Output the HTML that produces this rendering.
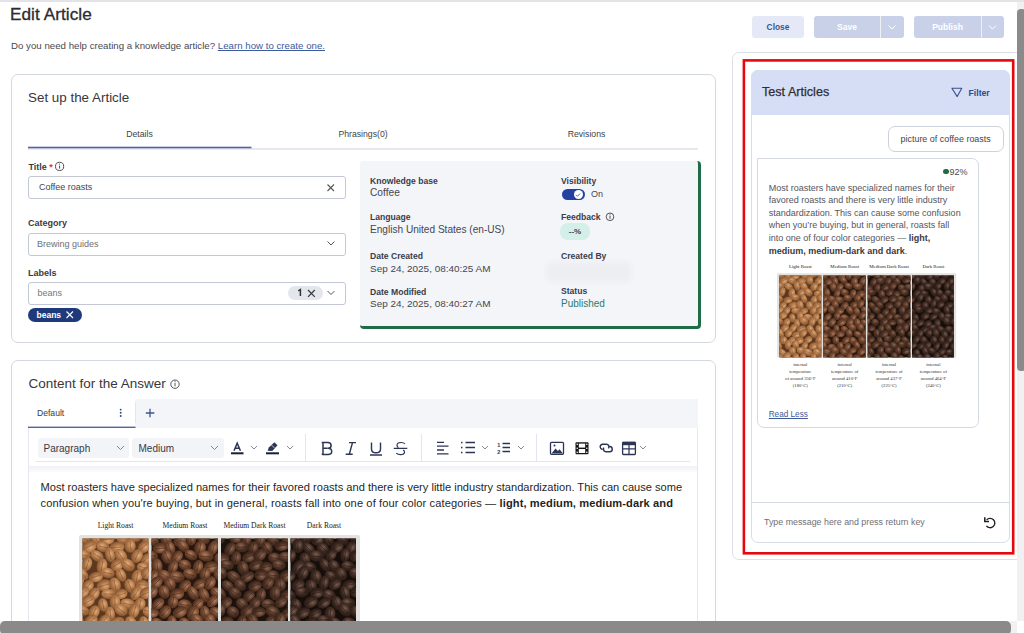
<!DOCTYPE html>
<html><head><meta charset="utf-8">
<style>
*{box-sizing:border-box;margin:0;padding:0}
html,body{width:1024px;height:633px;overflow:hidden;background:#fff;font-family:"Liberation Sans",sans-serif;color:#333}
.a{position:absolute;white-space:nowrap}
.card{position:absolute;border:1px solid #d3d7e0;border-radius:7px;background:#fff}
.lbl{position:absolute;font-weight:700;color:#3b3b3f;white-space:nowrap}
.inp{position:absolute;border:1px solid #c3c8d4;border-radius:3px;background:#fff}
svg{position:absolute;overflow:visible}
</style></head><body>
<svg width="0" height="0" style="position:absolute"><defs><clipPath id="c0"><rect x="3.5" y="19.5" width="66.0" height="128.5"/></clipPath><radialGradient id="g0" cx="0.42" cy="0.38" r="0.62"><stop offset="0" stop-color="rgb(226, 172, 122)"/><stop offset="0.55" stop-color="rgb(176, 118, 72)"/><stop offset="1" stop-color="rgb(134, 87, 51)"/></radialGradient><clipPath id="c1"><rect x="72.5" y="19.5" width="66.5" height="128.5"/></clipPath><radialGradient id="g1" cx="0.42" cy="0.38" r="0.62"><stop offset="0" stop-color="rgb(178, 126, 96)"/><stop offset="0.55" stop-color="rgb(110, 68, 45)"/><stop offset="1" stop-color="rgb(75, 45, 29)"/></radialGradient><clipPath id="c2"><rect x="142" y="19.5" width="67.0" height="128.5"/></clipPath><radialGradient id="g2" cx="0.42" cy="0.38" r="0.62"><stop offset="0" stop-color="rgb(142, 102, 82)"/><stop offset="0.55" stop-color="rgb(80, 51, 37)"/><stop offset="1" stop-color="rgb(54, 34, 24)"/></radialGradient><clipPath id="c3"><rect x="211.5" y="19.5" width="65.5" height="128.5"/></clipPath><radialGradient id="g3" cx="0.42" cy="0.38" r="0.62"><stop offset="0" stop-color="rgb(120, 92, 80)"/><stop offset="0.55" stop-color="rgb(60, 40, 32)"/><stop offset="1" stop-color="rgb(41, 27, 21)"/></radialGradient><symbol id="fig" viewBox="0 0 281 196"><rect x="0" y="16" width="281" height="132" rx="2" fill="#e4e2df"/><rect x="3.5" y="19.5" width="66.0" height="128.5" fill="rgb(92, 56, 30)"/><g clip-path="url(#c0)" fill="url(#g0)"><ellipse cx="5" cy="19" rx="7.1" ry="5.4" transform="rotate(33 5 19)"/><path d="M1 17L9 22" stroke="rgb(92, 56, 30)" stroke-width="0.7" stroke-opacity="0.6"/><ellipse cx="17" cy="20" rx="7.5" ry="4.9" transform="rotate(55 17 20)"/><path d="M14 16L20 24" stroke="rgb(92, 56, 30)" stroke-width="0.7" stroke-opacity="0.6"/><ellipse cx="28" cy="21" rx="7.4" ry="4.8" transform="rotate(177 28 21)"/><path d="M33 20L23 21" stroke="rgb(92, 56, 30)" stroke-width="0.7" stroke-opacity="0.6"/><ellipse cx="45" cy="20" rx="7.3" ry="5.0" transform="rotate(3 45 20)"/><path d="M40 20L50 20" stroke="rgb(92, 56, 30)" stroke-width="0.7" stroke-opacity="0.6"/><ellipse cx="56" cy="18" rx="6.7" ry="5.0" transform="rotate(5 56 18)"/><path d="M52 17L61 18" stroke="rgb(92, 56, 30)" stroke-width="0.7" stroke-opacity="0.6"/><ellipse cx="69" cy="19" rx="7.6" ry="5.3" transform="rotate(115 69 19)"/><path d="M72 14L67 24" stroke="rgb(92, 56, 30)" stroke-width="0.7" stroke-opacity="0.6"/><ellipse cx="10" cy="28" rx="7.8" ry="5.8" transform="rotate(151 10 28)"/><path d="M15 25L5 30" stroke="rgb(92, 56, 30)" stroke-width="0.7" stroke-opacity="0.6"/><ellipse cx="24" cy="28" rx="6.7" ry="5.1" transform="rotate(13 24 28)"/><path d="M20 27L29 29" stroke="rgb(92, 56, 30)" stroke-width="0.7" stroke-opacity="0.6"/><ellipse cx="38" cy="28" rx="7.6" ry="5.2" transform="rotate(172 38 28)"/><path d="M43 28L32 29" stroke="rgb(92, 56, 30)" stroke-width="0.7" stroke-opacity="0.6"/><ellipse cx="51" cy="27" rx="6.7" ry="5.7" transform="rotate(85 51 27)"/><path d="M51 22L52 31" stroke="rgb(92, 56, 30)" stroke-width="0.7" stroke-opacity="0.6"/><ellipse cx="65" cy="28" rx="6.5" ry="5.4" transform="rotate(140 65 28)"/><path d="M68 25L61 31" stroke="rgb(92, 56, 30)" stroke-width="0.7" stroke-opacity="0.6"/><ellipse cx="5" cy="36" rx="6.7" ry="4.9" transform="rotate(11 5 36)"/><path d="M-0 35L9 37" stroke="rgb(92, 56, 30)" stroke-width="0.7" stroke-opacity="0.6"/><ellipse cx="18" cy="37" rx="7.2" ry="5.2" transform="rotate(34 18 37)"/><path d="M14 34L22 39" stroke="rgb(92, 56, 30)" stroke-width="0.7" stroke-opacity="0.6"/><ellipse cx="31" cy="36" rx="7.3" ry="4.9" transform="rotate(76 31 36)"/><path d="M30 31L32 41" stroke="rgb(92, 56, 30)" stroke-width="0.7" stroke-opacity="0.6"/><ellipse cx="42" cy="37" rx="7.8" ry="5.6" transform="rotate(55 42 37)"/><path d="M39 33L45 41" stroke="rgb(92, 56, 30)" stroke-width="0.7" stroke-opacity="0.6"/><ellipse cx="58" cy="37" rx="7.0" ry="5.7" transform="rotate(116 58 37)"/><path d="M60 32L56 41" stroke="rgb(92, 56, 30)" stroke-width="0.7" stroke-opacity="0.6"/><ellipse cx="68" cy="40" rx="6.7" ry="5.1" transform="rotate(139 68 40)"/><path d="M71 37L64 43" stroke="rgb(92, 56, 30)" stroke-width="0.7" stroke-opacity="0.6"/><ellipse cx="8" cy="45" rx="7.2" ry="5.0" transform="rotate(108 8 45)"/><path d="M10 41L7 50" stroke="rgb(92, 56, 30)" stroke-width="0.7" stroke-opacity="0.6"/><ellipse cx="23" cy="47" rx="7.7" ry="5.3" transform="rotate(103 23 47)"/><path d="M24 42L22 52" stroke="rgb(92, 56, 30)" stroke-width="0.7" stroke-opacity="0.6"/><ellipse cx="38" cy="46" rx="6.6" ry="5.7" transform="rotate(147 38 46)"/><path d="M42 43L34 48" stroke="rgb(92, 56, 30)" stroke-width="0.7" stroke-opacity="0.6"/><ellipse cx="49" cy="46" rx="7.4" ry="5.7" transform="rotate(35 49 46)"/><path d="M44 43L53 49" stroke="rgb(92, 56, 30)" stroke-width="0.7" stroke-opacity="0.6"/><ellipse cx="65" cy="49" rx="7.2" ry="5.2" transform="rotate(19 65 49)"/><path d="M60 47L70 50" stroke="rgb(92, 56, 30)" stroke-width="0.7" stroke-opacity="0.6"/><ellipse cx="74" cy="49" rx="6.7" ry="5.5" transform="rotate(46 74 49)"/><path d="M71 45L78 52" stroke="rgb(92, 56, 30)" stroke-width="0.7" stroke-opacity="0.6"/><ellipse cx="3" cy="55" rx="7.4" ry="4.9" transform="rotate(41 3 55)"/><path d="M-1 52L7 58" stroke="rgb(92, 56, 30)" stroke-width="0.7" stroke-opacity="0.6"/><ellipse cx="17" cy="58" rx="7.3" ry="5.1" transform="rotate(165 17 58)"/><path d="M22 56L12 59" stroke="rgb(92, 56, 30)" stroke-width="0.7" stroke-opacity="0.6"/><ellipse cx="29" cy="54" rx="6.8" ry="5.2" transform="rotate(11 29 54)"/><path d="M24 53L33 55" stroke="rgb(92, 56, 30)" stroke-width="0.7" stroke-opacity="0.6"/><ellipse cx="42" cy="56" rx="7.2" ry="4.9" transform="rotate(65 42 56)"/><path d="M40 51L44 60" stroke="rgb(92, 56, 30)" stroke-width="0.7" stroke-opacity="0.6"/><ellipse cx="58" cy="58" rx="7.3" ry="5.5" transform="rotate(105 58 58)"/><path d="M59 53L57 63" stroke="rgb(92, 56, 30)" stroke-width="0.7" stroke-opacity="0.6"/><ellipse cx="68" cy="54" rx="6.4" ry="5.7" transform="rotate(126 68 54)"/><path d="M71 51L65 58" stroke="rgb(92, 56, 30)" stroke-width="0.7" stroke-opacity="0.6"/><ellipse cx="-1" cy="63" rx="7.3" ry="5.3" transform="rotate(131 -1 63)"/><path d="M2 60L-5 67" stroke="rgb(92, 56, 30)" stroke-width="0.7" stroke-opacity="0.6"/><ellipse cx="9" cy="67" rx="6.5" ry="5.3" transform="rotate(133 9 67)"/><path d="M12 64L6 71" stroke="rgb(92, 56, 30)" stroke-width="0.7" stroke-opacity="0.6"/><ellipse cx="25" cy="66" rx="7.4" ry="5.6" transform="rotate(165 25 66)"/><path d="M30 65L20 68" stroke="rgb(92, 56, 30)" stroke-width="0.7" stroke-opacity="0.6"/><ellipse cx="36" cy="66" rx="7.7" ry="5.7" transform="rotate(75 36 66)"/><path d="M35 61L37 71" stroke="rgb(92, 56, 30)" stroke-width="0.7" stroke-opacity="0.6"/><ellipse cx="51" cy="67" rx="7.2" ry="5.4" transform="rotate(69 51 67)"/><path d="M49 62L53 72" stroke="rgb(92, 56, 30)" stroke-width="0.7" stroke-opacity="0.6"/><ellipse cx="63" cy="66" rx="6.5" ry="5.4" transform="rotate(179 63 66)"/><path d="M68 66L59 66" stroke="rgb(92, 56, 30)" stroke-width="0.7" stroke-opacity="0.6"/><ellipse cx="4" cy="74" rx="7.6" ry="4.9" transform="rotate(135 4 74)"/><path d="M8 71L0 78" stroke="rgb(92, 56, 30)" stroke-width="0.7" stroke-opacity="0.6"/><ellipse cx="15" cy="75" rx="7.1" ry="5.0" transform="rotate(126 15 75)"/><path d="M18 71L12 79" stroke="rgb(92, 56, 30)" stroke-width="0.7" stroke-opacity="0.6"/><ellipse cx="30" cy="75" rx="7.7" ry="5.1" transform="rotate(2 30 75)"/><path d="M25 75L35 75" stroke="rgb(92, 56, 30)" stroke-width="0.7" stroke-opacity="0.6"/><ellipse cx="42" cy="75" rx="6.7" ry="5.0" transform="rotate(163 42 75)"/><path d="M47 74L38 77" stroke="rgb(92, 56, 30)" stroke-width="0.7" stroke-opacity="0.6"/><ellipse cx="57" cy="74" rx="7.6" ry="5.1" transform="rotate(120 57 74)"/><path d="M60 70L54 79" stroke="rgb(92, 56, 30)" stroke-width="0.7" stroke-opacity="0.6"/><ellipse cx="68" cy="74" rx="7.5" ry="5.7" transform="rotate(158 68 74)"/><path d="M73 72L63 76" stroke="rgb(92, 56, 30)" stroke-width="0.7" stroke-opacity="0.6"/><ellipse cx="9" cy="82" rx="7.1" ry="5.6" transform="rotate(153 9 82)"/><path d="M14 80L5 85" stroke="rgb(92, 56, 30)" stroke-width="0.7" stroke-opacity="0.6"/><ellipse cx="24" cy="86" rx="6.8" ry="5.0" transform="rotate(81 24 86)"/><path d="M23 81L25 90" stroke="rgb(92, 56, 30)" stroke-width="0.7" stroke-opacity="0.6"/><ellipse cx="36" cy="83" rx="7.0" ry="5.4" transform="rotate(89 36 83)"/><path d="M36 78L36 87" stroke="rgb(92, 56, 30)" stroke-width="0.7" stroke-opacity="0.6"/><ellipse cx="49" cy="85" rx="7.8" ry="5.3" transform="rotate(13 49 85)"/><path d="M44 84L54 86" stroke="rgb(92, 56, 30)" stroke-width="0.7" stroke-opacity="0.6"/><ellipse cx="61" cy="85" rx="6.5" ry="5.5" transform="rotate(103 61 85)"/><path d="M62 81L60 90" stroke="rgb(92, 56, 30)" stroke-width="0.7" stroke-opacity="0.6"/><ellipse cx="3" cy="91" rx="7.6" ry="5.0" transform="rotate(25 3 91)"/><path d="M-1 89L8 93" stroke="rgb(92, 56, 30)" stroke-width="0.7" stroke-opacity="0.6"/><ellipse cx="15" cy="93" rx="7.0" ry="5.4" transform="rotate(118 15 93)"/><path d="M17 89L13 98" stroke="rgb(92, 56, 30)" stroke-width="0.7" stroke-opacity="0.6"/><ellipse cx="31" cy="95" rx="7.4" ry="5.0" transform="rotate(86 31 95)"/><path d="M31 90L32 100" stroke="rgb(92, 56, 30)" stroke-width="0.7" stroke-opacity="0.6"/><ellipse cx="42" cy="91" rx="7.1" ry="5.5" transform="rotate(32 42 91)"/><path d="M38 88L46 94" stroke="rgb(92, 56, 30)" stroke-width="0.7" stroke-opacity="0.6"/><ellipse cx="55" cy="92" rx="7.4" ry="5.3" transform="rotate(111 55 92)"/><path d="M57 87L54 97" stroke="rgb(92, 56, 30)" stroke-width="0.7" stroke-opacity="0.6"/><ellipse cx="71" cy="93" rx="7.5" ry="5.7" transform="rotate(16 71 93)"/><path d="M65 91L76 94" stroke="rgb(92, 56, 30)" stroke-width="0.7" stroke-opacity="0.6"/><ellipse cx="-1" cy="103" rx="6.6" ry="5.3" transform="rotate(113 -1 103)"/><path d="M0 99L-3 107" stroke="rgb(92, 56, 30)" stroke-width="0.7" stroke-opacity="0.6"/><ellipse cx="12" cy="102" rx="7.2" ry="5.7" transform="rotate(143 12 102)"/><path d="M16 99L8 105" stroke="rgb(92, 56, 30)" stroke-width="0.7" stroke-opacity="0.6"/><ellipse cx="25" cy="102" rx="7.3" ry="5.0" transform="rotate(130 25 102)"/><path d="M28 98L22 106" stroke="rgb(92, 56, 30)" stroke-width="0.7" stroke-opacity="0.6"/><ellipse cx="38" cy="103" rx="7.4" ry="5.0" transform="rotate(162 38 103)"/><path d="M43 101L33 104" stroke="rgb(92, 56, 30)" stroke-width="0.7" stroke-opacity="0.6"/><ellipse cx="52" cy="104" rx="7.2" ry="5.6" transform="rotate(58 52 104)"/><path d="M49 100L54 108" stroke="rgb(92, 56, 30)" stroke-width="0.7" stroke-opacity="0.6"/><ellipse cx="65" cy="104" rx="6.9" ry="4.9" transform="rotate(79 65 104)"/><path d="M64 99L65 108" stroke="rgb(92, 56, 30)" stroke-width="0.7" stroke-opacity="0.6"/><ellipse cx="5" cy="110" rx="7.5" ry="5.0" transform="rotate(60 5 110)"/><path d="M2 105L7 114" stroke="rgb(92, 56, 30)" stroke-width="0.7" stroke-opacity="0.6"/><ellipse cx="18" cy="110" rx="6.6" ry="5.3" transform="rotate(130 18 110)"/><path d="M21 106L15 113" stroke="rgb(92, 56, 30)" stroke-width="0.7" stroke-opacity="0.6"/><ellipse cx="31" cy="112" rx="7.7" ry="5.3" transform="rotate(171 31 112)"/><path d="M37 111L26 113" stroke="rgb(92, 56, 30)" stroke-width="0.7" stroke-opacity="0.6"/><ellipse cx="41" cy="110" rx="7.1" ry="5.1" transform="rotate(131 41 110)"/><path d="M45 106L38 114" stroke="rgb(92, 56, 30)" stroke-width="0.7" stroke-opacity="0.6"/><ellipse cx="57" cy="111" rx="7.6" ry="5.4" transform="rotate(56 57 111)"/><path d="M54 107L60 116" stroke="rgb(92, 56, 30)" stroke-width="0.7" stroke-opacity="0.6"/><ellipse cx="69" cy="113" rx="7.7" ry="5.0" transform="rotate(153 69 113)"/><path d="M74 110L64 115" stroke="rgb(92, 56, 30)" stroke-width="0.7" stroke-opacity="0.6"/><ellipse cx="-1" cy="121" rx="7.2" ry="5.0" transform="rotate(96 -1 121)"/><path d="M-1 116L-2 126" stroke="rgb(92, 56, 30)" stroke-width="0.7" stroke-opacity="0.6"/><ellipse cx="10" cy="121" rx="6.4" ry="5.8" transform="rotate(93 10 121)"/><path d="M10 116L10 125" stroke="rgb(92, 56, 30)" stroke-width="0.7" stroke-opacity="0.6"/><ellipse cx="23" cy="122" rx="7.2" ry="5.3" transform="rotate(124 23 122)"/><path d="M26 118L20 126" stroke="rgb(92, 56, 30)" stroke-width="0.7" stroke-opacity="0.6"/><ellipse cx="35" cy="121" rx="7.0" ry="5.8" transform="rotate(166 35 121)"/><path d="M40 119L30 122" stroke="rgb(92, 56, 30)" stroke-width="0.7" stroke-opacity="0.6"/><ellipse cx="49" cy="120" rx="6.6" ry="5.2" transform="rotate(147 49 120)"/><path d="M53 118L45 123" stroke="rgb(92, 56, 30)" stroke-width="0.7" stroke-opacity="0.6"/><ellipse cx="65" cy="120" rx="6.8" ry="5.0" transform="rotate(111 65 120)"/><path d="M66 116L63 125" stroke="rgb(92, 56, 30)" stroke-width="0.7" stroke-opacity="0.6"/><ellipse cx="2" cy="129" rx="7.4" ry="5.1" transform="rotate(64 2 129)"/><path d="M0 124L5 133" stroke="rgb(92, 56, 30)" stroke-width="0.7" stroke-opacity="0.6"/><ellipse cx="17" cy="128" rx="7.4" ry="4.9" transform="rotate(92 17 128)"/><path d="M17 123L17 133" stroke="rgb(92, 56, 30)" stroke-width="0.7" stroke-opacity="0.6"/><ellipse cx="29" cy="128" rx="7.1" ry="5.2" transform="rotate(68 29 128)"/><path d="M27 124L31 133" stroke="rgb(92, 56, 30)" stroke-width="0.7" stroke-opacity="0.6"/><ellipse cx="43" cy="130" rx="6.6" ry="5.0" transform="rotate(114 43 130)"/><path d="M45 126L41 134" stroke="rgb(92, 56, 30)" stroke-width="0.7" stroke-opacity="0.6"/><ellipse cx="57" cy="130" rx="7.6" ry="5.4" transform="rotate(154 57 130)"/><path d="M62 127L52 132" stroke="rgb(92, 56, 30)" stroke-width="0.7" stroke-opacity="0.6"/><ellipse cx="68" cy="131" rx="7.5" ry="5.7" transform="rotate(57 68 131)"/><path d="M66 126L71 135" stroke="rgb(92, 56, 30)" stroke-width="0.7" stroke-opacity="0.6"/><ellipse cx="9" cy="141" rx="7.6" ry="4.9" transform="rotate(43 9 141)"/><path d="M5 137L13 144" stroke="rgb(92, 56, 30)" stroke-width="0.7" stroke-opacity="0.6"/><ellipse cx="24" cy="138" rx="6.5" ry="5.6" transform="rotate(76 24 138)"/><path d="M23 133L25 142" stroke="rgb(92, 56, 30)" stroke-width="0.7" stroke-opacity="0.6"/><ellipse cx="38" cy="137" rx="7.0" ry="5.5" transform="rotate(3 38 137)"/><path d="M33 137L43 138" stroke="rgb(92, 56, 30)" stroke-width="0.7" stroke-opacity="0.6"/><ellipse cx="49" cy="140" rx="7.7" ry="5.8" transform="rotate(21 49 140)"/><path d="M43 138L54 141" stroke="rgb(92, 56, 30)" stroke-width="0.7" stroke-opacity="0.6"/><ellipse cx="63" cy="140" rx="7.1" ry="5.5" transform="rotate(34 63 140)"/><path d="M59 137L67 143" stroke="rgb(92, 56, 30)" stroke-width="0.7" stroke-opacity="0.6"/><ellipse cx="74" cy="137" rx="6.5" ry="5.4" transform="rotate(93 74 137)"/><path d="M75 133L74 142" stroke="rgb(92, 56, 30)" stroke-width="0.7" stroke-opacity="0.6"/><ellipse cx="2" cy="147" rx="7.6" ry="5.8" transform="rotate(167 2 147)"/><path d="M7 146L-3 148" stroke="rgb(92, 56, 30)" stroke-width="0.7" stroke-opacity="0.6"/><ellipse cx="15" cy="146" rx="7.7" ry="5.3" transform="rotate(138 15 146)"/><path d="M19 143L11 150" stroke="rgb(92, 56, 30)" stroke-width="0.7" stroke-opacity="0.6"/><ellipse cx="29" cy="148" rx="7.1" ry="5.2" transform="rotate(108 29 148)"/><path d="M31 143L28 153" stroke="rgb(92, 56, 30)" stroke-width="0.7" stroke-opacity="0.6"/><ellipse cx="41" cy="149" rx="7.6" ry="5.0" transform="rotate(82 41 149)"/><path d="M40 144L42 154" stroke="rgb(92, 56, 30)" stroke-width="0.7" stroke-opacity="0.6"/><ellipse cx="57" cy="148" rx="6.7" ry="5.0" transform="rotate(92 57 148)"/><path d="M57 143L57 152" stroke="rgb(92, 56, 30)" stroke-width="0.7" stroke-opacity="0.6"/><ellipse cx="68" cy="150" rx="7.5" ry="5.5" transform="rotate(155 68 150)"/><path d="M72 147L63 152" stroke="rgb(92, 56, 30)" stroke-width="0.7" stroke-opacity="0.6"/></g><rect x="72.5" y="19.5" width="66.5" height="128.5" fill="rgb(40, 23, 14)"/><g clip-path="url(#c1)" fill="url(#g1)"><ellipse cx="73" cy="20" rx="7.8" ry="5.6" transform="rotate(46 73 20)"/><path d="M69 16L77 23" stroke="rgb(40, 23, 14)" stroke-width="0.7" stroke-opacity="0.6"/><ellipse cx="87" cy="20" rx="7.5" ry="5.6" transform="rotate(73 87 20)"/><path d="M86 15L89 25" stroke="rgb(40, 23, 14)" stroke-width="0.7" stroke-opacity="0.6"/><ellipse cx="101" cy="21" rx="7.4" ry="5.6" transform="rotate(138 101 21)"/><path d="M105 18L97 24" stroke="rgb(40, 23, 14)" stroke-width="0.7" stroke-opacity="0.6"/><ellipse cx="112" cy="20" rx="6.5" ry="5.1" transform="rotate(84 112 20)"/><path d="M112 16L112 25" stroke="rgb(40, 23, 14)" stroke-width="0.7" stroke-opacity="0.6"/><ellipse cx="124" cy="19" rx="7.3" ry="5.4" transform="rotate(42 124 19)"/><path d="M120 16L128 22" stroke="rgb(40, 23, 14)" stroke-width="0.7" stroke-opacity="0.6"/><ellipse cx="141" cy="20" rx="6.9" ry="5.5" transform="rotate(103 141 20)"/><path d="M142 15L140 25" stroke="rgb(40, 23, 14)" stroke-width="0.7" stroke-opacity="0.6"/><ellipse cx="81" cy="29" rx="7.4" ry="5.6" transform="rotate(176 81 29)"/><path d="M86 29L76 30" stroke="rgb(40, 23, 14)" stroke-width="0.7" stroke-opacity="0.6"/><ellipse cx="91" cy="29" rx="7.4" ry="5.1" transform="rotate(72 91 29)"/><path d="M89 24L92 34" stroke="rgb(40, 23, 14)" stroke-width="0.7" stroke-opacity="0.6"/><ellipse cx="104" cy="27" rx="6.9" ry="4.9" transform="rotate(45 104 27)"/><path d="M101 24L107 31" stroke="rgb(40, 23, 14)" stroke-width="0.7" stroke-opacity="0.6"/><ellipse cx="121" cy="29" rx="7.1" ry="5.8" transform="rotate(102 121 29)"/><path d="M122 24L120 34" stroke="rgb(40, 23, 14)" stroke-width="0.7" stroke-opacity="0.6"/><ellipse cx="134" cy="29" rx="7.5" ry="4.9" transform="rotate(108 134 29)"/><path d="M136 24L133 34" stroke="rgb(40, 23, 14)" stroke-width="0.7" stroke-opacity="0.6"/><ellipse cx="72" cy="37" rx="7.1" ry="5.4" transform="rotate(11 72 37)"/><path d="M68 36L77 37" stroke="rgb(40, 23, 14)" stroke-width="0.7" stroke-opacity="0.6"/><ellipse cx="88" cy="38" rx="7.1" ry="5.4" transform="rotate(66 88 38)"/><path d="M86 33L90 42" stroke="rgb(40, 23, 14)" stroke-width="0.7" stroke-opacity="0.6"/><ellipse cx="98" cy="38" rx="7.2" ry="5.1" transform="rotate(129 98 38)"/><path d="M101 35L95 42" stroke="rgb(40, 23, 14)" stroke-width="0.7" stroke-opacity="0.6"/><ellipse cx="112" cy="36" rx="6.7" ry="4.8" transform="rotate(28 112 36)"/><path d="M107 34L116 38" stroke="rgb(40, 23, 14)" stroke-width="0.7" stroke-opacity="0.6"/><ellipse cx="127" cy="37" rx="7.7" ry="5.5" transform="rotate(9 127 37)"/><path d="M121 37L132 38" stroke="rgb(40, 23, 14)" stroke-width="0.7" stroke-opacity="0.6"/><ellipse cx="141" cy="40" rx="6.5" ry="5.7" transform="rotate(77 141 40)"/><path d="M140 35L142 44" stroke="rgb(40, 23, 14)" stroke-width="0.7" stroke-opacity="0.6"/><ellipse cx="78" cy="47" rx="7.7" ry="5.5" transform="rotate(84 78 47)"/><path d="M78 42L79 53" stroke="rgb(40, 23, 14)" stroke-width="0.7" stroke-opacity="0.6"/><ellipse cx="94" cy="48" rx="7.2" ry="4.9" transform="rotate(112 94 48)"/><path d="M96 44L92 53" stroke="rgb(40, 23, 14)" stroke-width="0.7" stroke-opacity="0.6"/><ellipse cx="106" cy="46" rx="6.5" ry="5.3" transform="rotate(22 106 46)"/><path d="M101 44L110 48" stroke="rgb(40, 23, 14)" stroke-width="0.7" stroke-opacity="0.6"/><ellipse cx="119" cy="48" rx="7.0" ry="5.1" transform="rotate(105 119 48)"/><path d="M120 43L118 52" stroke="rgb(40, 23, 14)" stroke-width="0.7" stroke-opacity="0.6"/><ellipse cx="132" cy="48" rx="7.1" ry="5.8" transform="rotate(171 132 48)"/><path d="M137 47L127 49" stroke="rgb(40, 23, 14)" stroke-width="0.7" stroke-opacity="0.6"/><ellipse cx="74" cy="57" rx="6.9" ry="5.1" transform="rotate(123 74 57)"/><path d="M76 53L71 61" stroke="rgb(40, 23, 14)" stroke-width="0.7" stroke-opacity="0.6"/><ellipse cx="86" cy="57" rx="7.3" ry="5.6" transform="rotate(34 86 57)"/><path d="M82 54L90 59" stroke="rgb(40, 23, 14)" stroke-width="0.7" stroke-opacity="0.6"/><ellipse cx="98" cy="58" rx="7.7" ry="5.7" transform="rotate(7 98 58)"/><path d="M93 57L103 59" stroke="rgb(40, 23, 14)" stroke-width="0.7" stroke-opacity="0.6"/><ellipse cx="111" cy="55" rx="7.0" ry="5.4" transform="rotate(18 111 55)"/><path d="M106 54L115 57" stroke="rgb(40, 23, 14)" stroke-width="0.7" stroke-opacity="0.6"/><ellipse cx="126" cy="55" rx="6.5" ry="5.5" transform="rotate(99 126 55)"/><path d="M127 50L125 59" stroke="rgb(40, 23, 14)" stroke-width="0.7" stroke-opacity="0.6"/><ellipse cx="140" cy="56" rx="7.1" ry="5.0" transform="rotate(62 140 56)"/><path d="M137 51L142 60" stroke="rgb(40, 23, 14)" stroke-width="0.7" stroke-opacity="0.6"/><ellipse cx="77" cy="64" rx="7.5" ry="5.4" transform="rotate(138 77 64)"/><path d="M81 60L74 67" stroke="rgb(40, 23, 14)" stroke-width="0.7" stroke-opacity="0.6"/><ellipse cx="91" cy="65" rx="6.8" ry="5.6" transform="rotate(66 91 65)"/><path d="M89 61L93 69" stroke="rgb(40, 23, 14)" stroke-width="0.7" stroke-opacity="0.6"/><ellipse cx="106" cy="67" rx="6.9" ry="5.3" transform="rotate(134 106 67)"/><path d="M110 64L103 71" stroke="rgb(40, 23, 14)" stroke-width="0.7" stroke-opacity="0.6"/><ellipse cx="121" cy="65" rx="6.9" ry="4.9" transform="rotate(158 121 65)"/><path d="M125 63L116 67" stroke="rgb(40, 23, 14)" stroke-width="0.7" stroke-opacity="0.6"/><ellipse cx="131" cy="64" rx="7.2" ry="5.3" transform="rotate(123 131 64)"/><path d="M133 60L128 68" stroke="rgb(40, 23, 14)" stroke-width="0.7" stroke-opacity="0.6"/><ellipse cx="73" cy="73" rx="6.8" ry="5.5" transform="rotate(125 73 73)"/><path d="M76 69L70 77" stroke="rgb(40, 23, 14)" stroke-width="0.7" stroke-opacity="0.6"/><ellipse cx="85" cy="73" rx="6.9" ry="5.5" transform="rotate(66 85 73)"/><path d="M83 69L87 78" stroke="rgb(40, 23, 14)" stroke-width="0.7" stroke-opacity="0.6"/><ellipse cx="98" cy="75" rx="7.2" ry="5.7" transform="rotate(169 98 75)"/><path d="M103 74L93 76" stroke="rgb(40, 23, 14)" stroke-width="0.7" stroke-opacity="0.6"/><ellipse cx="114" cy="74" rx="7.5" ry="5.1" transform="rotate(57 114 74)"/><path d="M111 70L117 79" stroke="rgb(40, 23, 14)" stroke-width="0.7" stroke-opacity="0.6"/><ellipse cx="125" cy="76" rx="7.7" ry="5.0" transform="rotate(65 125 76)"/><path d="M123 71L128 81" stroke="rgb(40, 23, 14)" stroke-width="0.7" stroke-opacity="0.6"/><ellipse cx="138" cy="74" rx="7.0" ry="5.2" transform="rotate(35 138 74)"/><path d="M134 71L142 77" stroke="rgb(40, 23, 14)" stroke-width="0.7" stroke-opacity="0.6"/><ellipse cx="79" cy="85" rx="7.2" ry="5.0" transform="rotate(137 79 85)"/><path d="M83 82L76 89" stroke="rgb(40, 23, 14)" stroke-width="0.7" stroke-opacity="0.6"/><ellipse cx="94" cy="83" rx="6.4" ry="5.3" transform="rotate(98 94 83)"/><path d="M95 78L93 87" stroke="rgb(40, 23, 14)" stroke-width="0.7" stroke-opacity="0.6"/><ellipse cx="106" cy="86" rx="7.3" ry="5.6" transform="rotate(12 106 86)"/><path d="M101 85L111 87" stroke="rgb(40, 23, 14)" stroke-width="0.7" stroke-opacity="0.6"/><ellipse cx="119" cy="85" rx="6.5" ry="4.9" transform="rotate(133 119 85)"/><path d="M122 82L116 88" stroke="rgb(40, 23, 14)" stroke-width="0.7" stroke-opacity="0.6"/><ellipse cx="134" cy="82" rx="7.3" ry="4.9" transform="rotate(134 134 82)"/><path d="M138 78L130 86" stroke="rgb(40, 23, 14)" stroke-width="0.7" stroke-opacity="0.6"/><ellipse cx="73" cy="94" rx="7.0" ry="5.1" transform="rotate(174 73 94)"/><path d="M77 94L68 94" stroke="rgb(40, 23, 14)" stroke-width="0.7" stroke-opacity="0.6"/><ellipse cx="86" cy="93" rx="7.2" ry="5.5" transform="rotate(127 86 93)"/><path d="M90 89L83 97" stroke="rgb(40, 23, 14)" stroke-width="0.7" stroke-opacity="0.6"/><ellipse cx="101" cy="93" rx="7.6" ry="5.5" transform="rotate(154 101 93)"/><path d="M105 90L96 95" stroke="rgb(40, 23, 14)" stroke-width="0.7" stroke-opacity="0.6"/><ellipse cx="114" cy="94" rx="7.6" ry="5.8" transform="rotate(115 114 94)"/><path d="M116 89L111 99" stroke="rgb(40, 23, 14)" stroke-width="0.7" stroke-opacity="0.6"/><ellipse cx="126" cy="94" rx="7.5" ry="5.2" transform="rotate(76 126 94)"/><path d="M124 89L127 99" stroke="rgb(40, 23, 14)" stroke-width="0.7" stroke-opacity="0.6"/><ellipse cx="138" cy="94" rx="7.8" ry="5.2" transform="rotate(30 138 94)"/><path d="M133 91L142 97" stroke="rgb(40, 23, 14)" stroke-width="0.7" stroke-opacity="0.6"/><ellipse cx="78" cy="104" rx="6.5" ry="5.1" transform="rotate(21 78 104)"/><path d="M74 102L83 106" stroke="rgb(40, 23, 14)" stroke-width="0.7" stroke-opacity="0.6"/><ellipse cx="93" cy="103" rx="6.7" ry="4.9" transform="rotate(83 93 103)"/><path d="M92 99L94 108" stroke="rgb(40, 23, 14)" stroke-width="0.7" stroke-opacity="0.6"/><ellipse cx="106" cy="104" rx="6.5" ry="4.9" transform="rotate(33 106 104)"/><path d="M102 101L110 106" stroke="rgb(40, 23, 14)" stroke-width="0.7" stroke-opacity="0.6"/><ellipse cx="118" cy="101" rx="7.4" ry="5.4" transform="rotate(40 118 101)"/><path d="M114 98L122 104" stroke="rgb(40, 23, 14)" stroke-width="0.7" stroke-opacity="0.6"/><ellipse cx="131" cy="101" rx="6.6" ry="5.6" transform="rotate(56 131 101)"/><path d="M128 97L134 105" stroke="rgb(40, 23, 14)" stroke-width="0.7" stroke-opacity="0.6"/><ellipse cx="74" cy="113" rx="6.9" ry="5.3" transform="rotate(172 74 113)"/><path d="M79 112L69 114" stroke="rgb(40, 23, 14)" stroke-width="0.7" stroke-opacity="0.6"/><ellipse cx="86" cy="110" rx="6.5" ry="5.7" transform="rotate(144 86 110)"/><path d="M89 108L82 113" stroke="rgb(40, 23, 14)" stroke-width="0.7" stroke-opacity="0.6"/><ellipse cx="99" cy="111" rx="7.1" ry="5.1" transform="rotate(178 99 111)"/><path d="M104 111L94 112" stroke="rgb(40, 23, 14)" stroke-width="0.7" stroke-opacity="0.6"/><ellipse cx="113" cy="110" rx="6.4" ry="5.3" transform="rotate(67 113 110)"/><path d="M111 106L115 114" stroke="rgb(40, 23, 14)" stroke-width="0.7" stroke-opacity="0.6"/><ellipse cx="127" cy="112" rx="7.2" ry="5.0" transform="rotate(28 127 112)"/><path d="M122 110L131 115" stroke="rgb(40, 23, 14)" stroke-width="0.7" stroke-opacity="0.6"/><ellipse cx="138" cy="110" rx="7.6" ry="5.3" transform="rotate(115 138 110)"/><path d="M141 105L136 115" stroke="rgb(40, 23, 14)" stroke-width="0.7" stroke-opacity="0.6"/><ellipse cx="68" cy="120" rx="7.1" ry="5.0" transform="rotate(139 68 120)"/><path d="M72 116L64 123" stroke="rgb(40, 23, 14)" stroke-width="0.7" stroke-opacity="0.6"/><ellipse cx="77" cy="122" rx="7.6" ry="5.6" transform="rotate(15 77 122)"/><path d="M72 120L82 123" stroke="rgb(40, 23, 14)" stroke-width="0.7" stroke-opacity="0.6"/><ellipse cx="92" cy="121" rx="6.5" ry="5.3" transform="rotate(84 92 121)"/><path d="M91 117L92 126" stroke="rgb(40, 23, 14)" stroke-width="0.7" stroke-opacity="0.6"/><ellipse cx="108" cy="121" rx="7.6" ry="5.1" transform="rotate(142 108 121)"/><path d="M112 118L103 124" stroke="rgb(40, 23, 14)" stroke-width="0.7" stroke-opacity="0.6"/><ellipse cx="119" cy="122" rx="6.5" ry="5.6" transform="rotate(38 119 122)"/><path d="M115 119L122 125" stroke="rgb(40, 23, 14)" stroke-width="0.7" stroke-opacity="0.6"/><ellipse cx="133" cy="121" rx="6.6" ry="5.6" transform="rotate(56 133 121)"/><path d="M130 117L135 124" stroke="rgb(40, 23, 14)" stroke-width="0.7" stroke-opacity="0.6"/><ellipse cx="73" cy="129" rx="7.4" ry="4.9" transform="rotate(71 73 129)"/><path d="M72 124L75 134" stroke="rgb(40, 23, 14)" stroke-width="0.7" stroke-opacity="0.6"/><ellipse cx="86" cy="132" rx="7.6" ry="5.5" transform="rotate(2 86 132)"/><path d="M80 131L91 132" stroke="rgb(40, 23, 14)" stroke-width="0.7" stroke-opacity="0.6"/><ellipse cx="99" cy="130" rx="6.7" ry="5.4" transform="rotate(82 99 130)"/><path d="M98 126L99 135" stroke="rgb(40, 23, 14)" stroke-width="0.7" stroke-opacity="0.6"/><ellipse cx="110" cy="132" rx="7.5" ry="5.0" transform="rotate(111 110 132)"/><path d="M112 127L109 137" stroke="rgb(40, 23, 14)" stroke-width="0.7" stroke-opacity="0.6"/><ellipse cx="125" cy="129" rx="7.2" ry="5.1" transform="rotate(61 125 129)"/><path d="M122 125L127 134" stroke="rgb(40, 23, 14)" stroke-width="0.7" stroke-opacity="0.6"/><ellipse cx="139" cy="130" rx="6.8" ry="5.0" transform="rotate(132 139 130)"/><path d="M142 127L135 134" stroke="rgb(40, 23, 14)" stroke-width="0.7" stroke-opacity="0.6"/><ellipse cx="79" cy="140" rx="6.9" ry="5.6" transform="rotate(17 79 140)"/><path d="M75 138L84 141" stroke="rgb(40, 23, 14)" stroke-width="0.7" stroke-opacity="0.6"/><ellipse cx="91" cy="137" rx="7.3" ry="5.5" transform="rotate(32 91 137)"/><path d="M87 134L95 140" stroke="rgb(40, 23, 14)" stroke-width="0.7" stroke-opacity="0.6"/><ellipse cx="105" cy="140" rx="7.2" ry="4.9" transform="rotate(41 105 140)"/><path d="M102 137L109 143" stroke="rgb(40, 23, 14)" stroke-width="0.7" stroke-opacity="0.6"/><ellipse cx="118" cy="137" rx="7.0" ry="4.9" transform="rotate(166 118 137)"/><path d="M122 136L113 139" stroke="rgb(40, 23, 14)" stroke-width="0.7" stroke-opacity="0.6"/><ellipse cx="132" cy="139" rx="7.3" ry="5.6" transform="rotate(148 132 139)"/><path d="M136 136L128 142" stroke="rgb(40, 23, 14)" stroke-width="0.7" stroke-opacity="0.6"/><ellipse cx="72" cy="149" rx="7.8" ry="5.6" transform="rotate(119 72 149)"/><path d="M75 144L69 154" stroke="rgb(40, 23, 14)" stroke-width="0.7" stroke-opacity="0.6"/><ellipse cx="86" cy="146" rx="6.9" ry="5.1" transform="rotate(117 86 146)"/><path d="M88 142L84 150" stroke="rgb(40, 23, 14)" stroke-width="0.7" stroke-opacity="0.6"/><ellipse cx="98" cy="148" rx="7.1" ry="5.6" transform="rotate(149 98 148)"/><path d="M102 145L93 150" stroke="rgb(40, 23, 14)" stroke-width="0.7" stroke-opacity="0.6"/><ellipse cx="113" cy="147" rx="7.5" ry="5.7" transform="rotate(99 113 147)"/><path d="M114 141L112 152" stroke="rgb(40, 23, 14)" stroke-width="0.7" stroke-opacity="0.6"/><ellipse cx="125" cy="148" rx="6.6" ry="5.5" transform="rotate(178 125 148)"/><path d="M130 148L120 148" stroke="rgb(40, 23, 14)" stroke-width="0.7" stroke-opacity="0.6"/><ellipse cx="139" cy="149" rx="7.6" ry="5.0" transform="rotate(170 139 149)"/><path d="M144 148L134 150" stroke="rgb(40, 23, 14)" stroke-width="0.7" stroke-opacity="0.6"/></g><rect x="142" y="19.5" width="67.0" height="128.5" fill="rgb(28, 18, 12)"/><g clip-path="url(#c2)" fill="url(#g2)"><ellipse cx="140" cy="18" rx="7.2" ry="5.5" transform="rotate(59 140 18)"/><path d="M138 14L143 23" stroke="rgb(28, 18, 12)" stroke-width="0.7" stroke-opacity="0.6"/><ellipse cx="157" cy="19" rx="7.0" ry="4.9" transform="rotate(175 157 19)"/><path d="M162 19L152 19" stroke="rgb(28, 18, 12)" stroke-width="0.7" stroke-opacity="0.6"/><ellipse cx="167" cy="21" rx="7.2" ry="5.4" transform="rotate(101 167 21)"/><path d="M168 16L166 26" stroke="rgb(28, 18, 12)" stroke-width="0.7" stroke-opacity="0.6"/><ellipse cx="181" cy="21" rx="7.8" ry="5.6" transform="rotate(108 181 21)"/><path d="M183 16L180 26" stroke="rgb(28, 18, 12)" stroke-width="0.7" stroke-opacity="0.6"/><ellipse cx="194" cy="21" rx="6.8" ry="5.7" transform="rotate(43 194 21)"/><path d="M191 18L198 24" stroke="rgb(28, 18, 12)" stroke-width="0.7" stroke-opacity="0.6"/><ellipse cx="209" cy="21" rx="6.7" ry="5.3" transform="rotate(14 209 21)"/><path d="M205 20L214 22" stroke="rgb(28, 18, 12)" stroke-width="0.7" stroke-opacity="0.6"/><ellipse cx="151" cy="30" rx="7.3" ry="5.1" transform="rotate(121 151 30)"/><path d="M153 26L148 35" stroke="rgb(28, 18, 12)" stroke-width="0.7" stroke-opacity="0.6"/><ellipse cx="163" cy="28" rx="7.2" ry="5.6" transform="rotate(3 163 28)"/><path d="M158 28L168 28" stroke="rgb(28, 18, 12)" stroke-width="0.7" stroke-opacity="0.6"/><ellipse cx="174" cy="29" rx="6.6" ry="5.2" transform="rotate(103 174 29)"/><path d="M175 24L173 33" stroke="rgb(28, 18, 12)" stroke-width="0.7" stroke-opacity="0.6"/><ellipse cx="188" cy="29" rx="6.8" ry="5.4" transform="rotate(60 188 29)"/><path d="M185 25L190 33" stroke="rgb(28, 18, 12)" stroke-width="0.7" stroke-opacity="0.6"/><ellipse cx="203" cy="27" rx="7.3" ry="4.9" transform="rotate(173 203 27)"/><path d="M208 26L198 27" stroke="rgb(28, 18, 12)" stroke-width="0.7" stroke-opacity="0.6"/><ellipse cx="143" cy="39" rx="7.5" ry="5.3" transform="rotate(179 143 39)"/><path d="M148 39L138 39" stroke="rgb(28, 18, 12)" stroke-width="0.7" stroke-opacity="0.6"/><ellipse cx="157" cy="39" rx="7.0" ry="5.2" transform="rotate(102 157 39)"/><path d="M158 35L156 44" stroke="rgb(28, 18, 12)" stroke-width="0.7" stroke-opacity="0.6"/><ellipse cx="170" cy="38" rx="7.1" ry="5.2" transform="rotate(163 170 38)"/><path d="M175 36L166 39" stroke="rgb(28, 18, 12)" stroke-width="0.7" stroke-opacity="0.6"/><ellipse cx="181" cy="36" rx="7.4" ry="5.7" transform="rotate(132 181 36)"/><path d="M185 32L178 40" stroke="rgb(28, 18, 12)" stroke-width="0.7" stroke-opacity="0.6"/><ellipse cx="196" cy="39" rx="6.8" ry="5.4" transform="rotate(13 196 39)"/><path d="M191 38L201 40" stroke="rgb(28, 18, 12)" stroke-width="0.7" stroke-opacity="0.6"/><ellipse cx="207" cy="38" rx="7.1" ry="5.2" transform="rotate(9 207 38)"/><path d="M203 37L212 38" stroke="rgb(28, 18, 12)" stroke-width="0.7" stroke-opacity="0.6"/><ellipse cx="148" cy="46" rx="7.0" ry="5.0" transform="rotate(12 148 46)"/><path d="M143 45L152 47" stroke="rgb(28, 18, 12)" stroke-width="0.7" stroke-opacity="0.6"/><ellipse cx="164" cy="49" rx="7.3" ry="5.7" transform="rotate(76 164 49)"/><path d="M162 44L165 54" stroke="rgb(28, 18, 12)" stroke-width="0.7" stroke-opacity="0.6"/><ellipse cx="177" cy="46" rx="7.4" ry="5.4" transform="rotate(163 177 46)"/><path d="M182 44L172 47" stroke="rgb(28, 18, 12)" stroke-width="0.7" stroke-opacity="0.6"/><ellipse cx="187" cy="48" rx="6.6" ry="5.3" transform="rotate(171 187 48)"/><path d="M192 47L183 49" stroke="rgb(28, 18, 12)" stroke-width="0.7" stroke-opacity="0.6"/><ellipse cx="200" cy="46" rx="6.8" ry="5.1" transform="rotate(11 200 46)"/><path d="M196 45L205 47" stroke="rgb(28, 18, 12)" stroke-width="0.7" stroke-opacity="0.6"/><ellipse cx="142" cy="54" rx="6.4" ry="5.7" transform="rotate(55 142 54)"/><path d="M140 51L145 58" stroke="rgb(28, 18, 12)" stroke-width="0.7" stroke-opacity="0.6"/><ellipse cx="155" cy="58" rx="7.8" ry="5.3" transform="rotate(37 155 58)"/><path d="M151 55L160 61" stroke="rgb(28, 18, 12)" stroke-width="0.7" stroke-opacity="0.6"/><ellipse cx="168" cy="58" rx="7.7" ry="5.0" transform="rotate(151 168 58)"/><path d="M173 55L163 61" stroke="rgb(28, 18, 12)" stroke-width="0.7" stroke-opacity="0.6"/><ellipse cx="182" cy="56" rx="6.6" ry="5.7" transform="rotate(179 182 56)"/><path d="M186 56L177 56" stroke="rgb(28, 18, 12)" stroke-width="0.7" stroke-opacity="0.6"/><ellipse cx="194" cy="57" rx="6.7" ry="5.7" transform="rotate(9 194 57)"/><path d="M190 56L199 57" stroke="rgb(28, 18, 12)" stroke-width="0.7" stroke-opacity="0.6"/><ellipse cx="207" cy="57" rx="6.8" ry="5.7" transform="rotate(157 207 57)"/><path d="M212 55L203 59" stroke="rgb(28, 18, 12)" stroke-width="0.7" stroke-opacity="0.6"/><ellipse cx="149" cy="67" rx="7.0" ry="4.9" transform="rotate(40 149 67)"/><path d="M146 64L153 70" stroke="rgb(28, 18, 12)" stroke-width="0.7" stroke-opacity="0.6"/><ellipse cx="161" cy="66" rx="6.7" ry="5.0" transform="rotate(42 161 66)"/><path d="M158 63L165 69" stroke="rgb(28, 18, 12)" stroke-width="0.7" stroke-opacity="0.6"/><ellipse cx="176" cy="67" rx="6.9" ry="5.5" transform="rotate(159 176 67)"/><path d="M181 65L172 68" stroke="rgb(28, 18, 12)" stroke-width="0.7" stroke-opacity="0.6"/><ellipse cx="189" cy="64" rx="6.8" ry="5.7" transform="rotate(120 189 64)"/><path d="M192 60L187 68" stroke="rgb(28, 18, 12)" stroke-width="0.7" stroke-opacity="0.6"/><ellipse cx="201" cy="66" rx="6.5" ry="5.8" transform="rotate(79 201 66)"/><path d="M201 61L202 70" stroke="rgb(28, 18, 12)" stroke-width="0.7" stroke-opacity="0.6"/><ellipse cx="141" cy="74" rx="7.5" ry="4.9" transform="rotate(51 141 74)"/><path d="M138 69L144 78" stroke="rgb(28, 18, 12)" stroke-width="0.7" stroke-opacity="0.6"/><ellipse cx="156" cy="74" rx="6.8" ry="5.3" transform="rotate(34 156 74)"/><path d="M152 71L160 76" stroke="rgb(28, 18, 12)" stroke-width="0.7" stroke-opacity="0.6"/><ellipse cx="170" cy="77" rx="6.4" ry="5.3" transform="rotate(135 170 77)"/><path d="M174 73L167 80" stroke="rgb(28, 18, 12)" stroke-width="0.7" stroke-opacity="0.6"/><ellipse cx="182" cy="76" rx="7.1" ry="5.0" transform="rotate(100 182 76)"/><path d="M183 71L181 81" stroke="rgb(28, 18, 12)" stroke-width="0.7" stroke-opacity="0.6"/><ellipse cx="196" cy="74" rx="7.3" ry="5.6" transform="rotate(93 196 74)"/><path d="M196 69L196 79" stroke="rgb(28, 18, 12)" stroke-width="0.7" stroke-opacity="0.6"/><ellipse cx="209" cy="76" rx="7.4" ry="5.3" transform="rotate(171 209 76)"/><path d="M214 75L204 77" stroke="rgb(28, 18, 12)" stroke-width="0.7" stroke-opacity="0.6"/><ellipse cx="147" cy="84" rx="6.7" ry="5.2" transform="rotate(139 147 84)"/><path d="M151 81L144 87" stroke="rgb(28, 18, 12)" stroke-width="0.7" stroke-opacity="0.6"/><ellipse cx="163" cy="85" rx="6.7" ry="5.3" transform="rotate(40 163 85)"/><path d="M160 82L167 88" stroke="rgb(28, 18, 12)" stroke-width="0.7" stroke-opacity="0.6"/><ellipse cx="176" cy="84" rx="6.4" ry="5.4" transform="rotate(129 176 84)"/><path d="M179 80L173 87" stroke="rgb(28, 18, 12)" stroke-width="0.7" stroke-opacity="0.6"/><ellipse cx="189" cy="85" rx="6.7" ry="5.0" transform="rotate(3 189 85)"/><path d="M185 85L194 86" stroke="rgb(28, 18, 12)" stroke-width="0.7" stroke-opacity="0.6"/><ellipse cx="202" cy="83" rx="7.0" ry="5.1" transform="rotate(144 202 83)"/><path d="M206 81L198 86" stroke="rgb(28, 18, 12)" stroke-width="0.7" stroke-opacity="0.6"/><ellipse cx="214" cy="85" rx="7.2" ry="5.3" transform="rotate(142 214 85)"/><path d="M218 82L210 88" stroke="rgb(28, 18, 12)" stroke-width="0.7" stroke-opacity="0.6"/><ellipse cx="141" cy="91" rx="6.8" ry="5.4" transform="rotate(95 141 91)"/><path d="M142 86L141 96" stroke="rgb(28, 18, 12)" stroke-width="0.7" stroke-opacity="0.6"/><ellipse cx="154" cy="93" rx="6.5" ry="5.6" transform="rotate(31 154 93)"/><path d="M151 91L158 96" stroke="rgb(28, 18, 12)" stroke-width="0.7" stroke-opacity="0.6"/><ellipse cx="168" cy="92" rx="7.4" ry="5.6" transform="rotate(142 168 92)"/><path d="M172 88L164 95" stroke="rgb(28, 18, 12)" stroke-width="0.7" stroke-opacity="0.6"/><ellipse cx="180" cy="93" rx="6.9" ry="5.0" transform="rotate(175 180 93)"/><path d="M185 92L176 93" stroke="rgb(28, 18, 12)" stroke-width="0.7" stroke-opacity="0.6"/><ellipse cx="194" cy="93" rx="7.5" ry="5.8" transform="rotate(26 194 93)"/><path d="M189 91L198 95" stroke="rgb(28, 18, 12)" stroke-width="0.7" stroke-opacity="0.6"/><ellipse cx="209" cy="94" rx="6.5" ry="5.0" transform="rotate(160 209 94)"/><path d="M213 92L205 95" stroke="rgb(28, 18, 12)" stroke-width="0.7" stroke-opacity="0.6"/><ellipse cx="148" cy="102" rx="6.5" ry="4.8" transform="rotate(179 148 102)"/><path d="M152 102L143 102" stroke="rgb(28, 18, 12)" stroke-width="0.7" stroke-opacity="0.6"/><ellipse cx="163" cy="103" rx="6.7" ry="5.1" transform="rotate(99 163 103)"/><path d="M164 98L162 108" stroke="rgb(28, 18, 12)" stroke-width="0.7" stroke-opacity="0.6"/><ellipse cx="174" cy="102" rx="7.7" ry="5.2" transform="rotate(61 174 102)"/><path d="M172 97L177 107" stroke="rgb(28, 18, 12)" stroke-width="0.7" stroke-opacity="0.6"/><ellipse cx="191" cy="103" rx="6.5" ry="5.2" transform="rotate(117 191 103)"/><path d="M193 99L189 107" stroke="rgb(28, 18, 12)" stroke-width="0.7" stroke-opacity="0.6"/><ellipse cx="201" cy="101" rx="7.4" ry="5.7" transform="rotate(106 201 101)"/><path d="M202 97L199 106" stroke="rgb(28, 18, 12)" stroke-width="0.7" stroke-opacity="0.6"/><ellipse cx="142" cy="112" rx="6.7" ry="5.1" transform="rotate(33 142 112)"/><path d="M138 110L145 115" stroke="rgb(28, 18, 12)" stroke-width="0.7" stroke-opacity="0.6"/><ellipse cx="156" cy="110" rx="6.7" ry="5.0" transform="rotate(84 156 110)"/><path d="M155 105L156 115" stroke="rgb(28, 18, 12)" stroke-width="0.7" stroke-opacity="0.6"/><ellipse cx="168" cy="111" rx="7.8" ry="5.5" transform="rotate(155 168 111)"/><path d="M173 109L163 113" stroke="rgb(28, 18, 12)" stroke-width="0.7" stroke-opacity="0.6"/><ellipse cx="181" cy="111" rx="6.5" ry="5.5" transform="rotate(65 181 111)"/><path d="M179 107L183 115" stroke="rgb(28, 18, 12)" stroke-width="0.7" stroke-opacity="0.6"/><ellipse cx="195" cy="109" rx="6.7" ry="5.1" transform="rotate(71 195 109)"/><path d="M193 105L196 114" stroke="rgb(28, 18, 12)" stroke-width="0.7" stroke-opacity="0.6"/><ellipse cx="211" cy="112" rx="6.8" ry="5.2" transform="rotate(28 211 112)"/><path d="M206 110L215 114" stroke="rgb(28, 18, 12)" stroke-width="0.7" stroke-opacity="0.6"/><ellipse cx="137" cy="120" rx="7.5" ry="5.5" transform="rotate(163 137 120)"/><path d="M142 118L132 121" stroke="rgb(28, 18, 12)" stroke-width="0.7" stroke-opacity="0.6"/><ellipse cx="147" cy="120" rx="6.9" ry="4.9" transform="rotate(159 147 120)"/><path d="M151 118L142 122" stroke="rgb(28, 18, 12)" stroke-width="0.7" stroke-opacity="0.6"/><ellipse cx="161" cy="122" rx="7.1" ry="4.9" transform="rotate(71 161 122)"/><path d="M160 117L163 126" stroke="rgb(28, 18, 12)" stroke-width="0.7" stroke-opacity="0.6"/><ellipse cx="174" cy="119" rx="6.6" ry="5.4" transform="rotate(6 174 119)"/><path d="M170 118L179 119" stroke="rgb(28, 18, 12)" stroke-width="0.7" stroke-opacity="0.6"/><ellipse cx="188" cy="120" rx="7.2" ry="4.9" transform="rotate(127 188 120)"/><path d="M191 116L185 124" stroke="rgb(28, 18, 12)" stroke-width="0.7" stroke-opacity="0.6"/><ellipse cx="201" cy="121" rx="7.3" ry="4.9" transform="rotate(37 201 121)"/><path d="M197 118L205 124" stroke="rgb(28, 18, 12)" stroke-width="0.7" stroke-opacity="0.6"/><ellipse cx="143" cy="129" rx="6.8" ry="5.1" transform="rotate(39 143 129)"/><path d="M140 126L147 132" stroke="rgb(28, 18, 12)" stroke-width="0.7" stroke-opacity="0.6"/><ellipse cx="154" cy="128" rx="7.3" ry="5.4" transform="rotate(146 154 128)"/><path d="M158 125L149 131" stroke="rgb(28, 18, 12)" stroke-width="0.7" stroke-opacity="0.6"/><ellipse cx="171" cy="129" rx="7.3" ry="5.7" transform="rotate(39 171 129)"/><path d="M167 126L175 132" stroke="rgb(28, 18, 12)" stroke-width="0.7" stroke-opacity="0.6"/><ellipse cx="183" cy="130" rx="7.7" ry="5.7" transform="rotate(42 183 130)"/><path d="M179 127L187 134" stroke="rgb(28, 18, 12)" stroke-width="0.7" stroke-opacity="0.6"/><ellipse cx="196" cy="128" rx="7.0" ry="5.2" transform="rotate(11 196 128)"/><path d="M191 127L201 129" stroke="rgb(28, 18, 12)" stroke-width="0.7" stroke-opacity="0.6"/><ellipse cx="209" cy="129" rx="7.1" ry="5.1" transform="rotate(29 209 129)"/><path d="M204 127L213 131" stroke="rgb(28, 18, 12)" stroke-width="0.7" stroke-opacity="0.6"/><ellipse cx="147" cy="139" rx="6.7" ry="4.9" transform="rotate(62 147 139)"/><path d="M145 135L150 144" stroke="rgb(28, 18, 12)" stroke-width="0.7" stroke-opacity="0.6"/><ellipse cx="162" cy="137" rx="7.2" ry="5.5" transform="rotate(100 162 137)"/><path d="M163 132L161 142" stroke="rgb(28, 18, 12)" stroke-width="0.7" stroke-opacity="0.6"/><ellipse cx="176" cy="137" rx="6.9" ry="5.2" transform="rotate(11 176 137)"/><path d="M172 136L181 138" stroke="rgb(28, 18, 12)" stroke-width="0.7" stroke-opacity="0.6"/><ellipse cx="189" cy="137" rx="7.1" ry="5.4" transform="rotate(84 189 137)"/><path d="M188 132L189 142" stroke="rgb(28, 18, 12)" stroke-width="0.7" stroke-opacity="0.6"/><ellipse cx="202" cy="138" rx="6.4" ry="5.1" transform="rotate(161 202 138)"/><path d="M206 136L197 139" stroke="rgb(28, 18, 12)" stroke-width="0.7" stroke-opacity="0.6"/><ellipse cx="142" cy="148" rx="7.7" ry="5.2" transform="rotate(104 142 148)"/><path d="M143 143L141 154" stroke="rgb(28, 18, 12)" stroke-width="0.7" stroke-opacity="0.6"/><ellipse cx="157" cy="149" rx="7.3" ry="5.4" transform="rotate(74 157 149)"/><path d="M156 144L159 154" stroke="rgb(28, 18, 12)" stroke-width="0.7" stroke-opacity="0.6"/><ellipse cx="168" cy="147" rx="7.6" ry="5.7" transform="rotate(69 168 147)"/><path d="M167 142L170 152" stroke="rgb(28, 18, 12)" stroke-width="0.7" stroke-opacity="0.6"/><ellipse cx="184" cy="146" rx="6.6" ry="5.3" transform="rotate(56 184 146)"/><path d="M181 142L186 150" stroke="rgb(28, 18, 12)" stroke-width="0.7" stroke-opacity="0.6"/><ellipse cx="195" cy="150" rx="6.6" ry="5.0" transform="rotate(41 195 150)"/><path d="M192 147L199 153" stroke="rgb(28, 18, 12)" stroke-width="0.7" stroke-opacity="0.6"/><ellipse cx="210" cy="147" rx="6.4" ry="5.3" transform="rotate(71 210 147)"/><path d="M208 143L211 151" stroke="rgb(28, 18, 12)" stroke-width="0.7" stroke-opacity="0.6"/></g><rect x="211.5" y="19.5" width="65.5" height="128.5" fill="rgb(22, 14, 10)"/><g clip-path="url(#c3)" fill="url(#g3)"><ellipse cx="212" cy="20" rx="7.3" ry="5.4" transform="rotate(150 212 20)"/><path d="M216 17L208 22" stroke="rgb(22, 14, 10)" stroke-width="0.7" stroke-opacity="0.6"/><ellipse cx="226" cy="19" rx="6.9" ry="5.7" transform="rotate(56 226 19)"/><path d="M224 15L229 23" stroke="rgb(22, 14, 10)" stroke-width="0.7" stroke-opacity="0.6"/><ellipse cx="239" cy="20" rx="7.4" ry="5.8" transform="rotate(148 239 20)"/><path d="M243 18L234 23" stroke="rgb(22, 14, 10)" stroke-width="0.7" stroke-opacity="0.6"/><ellipse cx="249" cy="20" rx="7.1" ry="5.4" transform="rotate(67 249 20)"/><path d="M247 15L251 25" stroke="rgb(22, 14, 10)" stroke-width="0.7" stroke-opacity="0.6"/><ellipse cx="263" cy="20" rx="7.1" ry="5.0" transform="rotate(45 263 20)"/><path d="M259 17L267 24" stroke="rgb(22, 14, 10)" stroke-width="0.7" stroke-opacity="0.6"/><ellipse cx="276" cy="18" rx="7.1" ry="4.9" transform="rotate(11 276 18)"/><path d="M271 17L281 19" stroke="rgb(22, 14, 10)" stroke-width="0.7" stroke-opacity="0.6"/><ellipse cx="219" cy="27" rx="7.0" ry="5.6" transform="rotate(87 219 27)"/><path d="M219 22L219 32" stroke="rgb(22, 14, 10)" stroke-width="0.7" stroke-opacity="0.6"/><ellipse cx="230" cy="30" rx="7.6" ry="4.9" transform="rotate(46 230 30)"/><path d="M226 26L234 34" stroke="rgb(22, 14, 10)" stroke-width="0.7" stroke-opacity="0.6"/><ellipse cx="244" cy="30" rx="6.9" ry="5.5" transform="rotate(45 244 30)"/><path d="M241 26L248 33" stroke="rgb(22, 14, 10)" stroke-width="0.7" stroke-opacity="0.6"/><ellipse cx="258" cy="28" rx="6.9" ry="5.6" transform="rotate(152 258 28)"/><path d="M262 26L254 30" stroke="rgb(22, 14, 10)" stroke-width="0.7" stroke-opacity="0.6"/><ellipse cx="272" cy="29" rx="7.0" ry="5.5" transform="rotate(112 272 29)"/><path d="M274 24L270 33" stroke="rgb(22, 14, 10)" stroke-width="0.7" stroke-opacity="0.6"/><ellipse cx="212" cy="37" rx="6.7" ry="4.8" transform="rotate(105 212 37)"/><path d="M213 32L211 41" stroke="rgb(22, 14, 10)" stroke-width="0.7" stroke-opacity="0.6"/><ellipse cx="226" cy="40" rx="6.6" ry="5.5" transform="rotate(75 226 40)"/><path d="M225 35L228 44" stroke="rgb(22, 14, 10)" stroke-width="0.7" stroke-opacity="0.6"/><ellipse cx="238" cy="37" rx="7.7" ry="5.8" transform="rotate(9 238 37)"/><path d="M233 37L244 38" stroke="rgb(22, 14, 10)" stroke-width="0.7" stroke-opacity="0.6"/><ellipse cx="252" cy="36" rx="6.5" ry="5.1" transform="rotate(132 252 36)"/><path d="M255 33L249 40" stroke="rgb(22, 14, 10)" stroke-width="0.7" stroke-opacity="0.6"/><ellipse cx="266" cy="36" rx="6.9" ry="4.8" transform="rotate(98 266 36)"/><path d="M267 32L265 41" stroke="rgb(22, 14, 10)" stroke-width="0.7" stroke-opacity="0.6"/><ellipse cx="277" cy="37" rx="6.8" ry="5.6" transform="rotate(151 277 37)"/><path d="M281 35L273 40" stroke="rgb(22, 14, 10)" stroke-width="0.7" stroke-opacity="0.6"/><ellipse cx="219" cy="48" rx="7.8" ry="5.2" transform="rotate(125 219 48)"/><path d="M222 44L215 53" stroke="rgb(22, 14, 10)" stroke-width="0.7" stroke-opacity="0.6"/><ellipse cx="231" cy="48" rx="6.6" ry="5.0" transform="rotate(19 231 48)"/><path d="M227 47L236 50" stroke="rgb(22, 14, 10)" stroke-width="0.7" stroke-opacity="0.6"/><ellipse cx="246" cy="46" rx="7.1" ry="4.9" transform="rotate(58 246 46)"/><path d="M243 42L249 50" stroke="rgb(22, 14, 10)" stroke-width="0.7" stroke-opacity="0.6"/><ellipse cx="255" cy="47" rx="6.6" ry="5.4" transform="rotate(49 255 47)"/><path d="M252 44L258 51" stroke="rgb(22, 14, 10)" stroke-width="0.7" stroke-opacity="0.6"/><ellipse cx="269" cy="47" rx="6.9" ry="5.1" transform="rotate(9 269 47)"/><path d="M265 46L274 48" stroke="rgb(22, 14, 10)" stroke-width="0.7" stroke-opacity="0.6"/><ellipse cx="282" cy="49" rx="6.8" ry="4.9" transform="rotate(33 282 49)"/><path d="M278 46L286 51" stroke="rgb(22, 14, 10)" stroke-width="0.7" stroke-opacity="0.6"/><ellipse cx="210" cy="58" rx="7.1" ry="5.2" transform="rotate(145 210 58)"/><path d="M214 55L206 61" stroke="rgb(22, 14, 10)" stroke-width="0.7" stroke-opacity="0.6"/><ellipse cx="224" cy="54" rx="7.2" ry="5.5" transform="rotate(112 224 54)"/><path d="M226 50L222 59" stroke="rgb(22, 14, 10)" stroke-width="0.7" stroke-opacity="0.6"/><ellipse cx="237" cy="58" rx="7.6" ry="5.8" transform="rotate(80 237 58)"/><path d="M236 53L238 63" stroke="rgb(22, 14, 10)" stroke-width="0.7" stroke-opacity="0.6"/><ellipse cx="252" cy="57" rx="6.6" ry="4.8" transform="rotate(30 252 57)"/><path d="M248 55L256 59" stroke="rgb(22, 14, 10)" stroke-width="0.7" stroke-opacity="0.6"/><ellipse cx="262" cy="55" rx="6.9" ry="5.6" transform="rotate(56 262 55)"/><path d="M260 51L265 59" stroke="rgb(22, 14, 10)" stroke-width="0.7" stroke-opacity="0.6"/><ellipse cx="277" cy="54" rx="6.7" ry="5.8" transform="rotate(2 277 54)"/><path d="M272 54L282 54" stroke="rgb(22, 14, 10)" stroke-width="0.7" stroke-opacity="0.6"/><ellipse cx="219" cy="66" rx="7.0" ry="5.6" transform="rotate(149 219 66)"/><path d="M223 64L215 69" stroke="rgb(22, 14, 10)" stroke-width="0.7" stroke-opacity="0.6"/><ellipse cx="232" cy="67" rx="6.5" ry="5.8" transform="rotate(72 232 67)"/><path d="M231 63L234 72" stroke="rgb(22, 14, 10)" stroke-width="0.7" stroke-opacity="0.6"/><ellipse cx="245" cy="64" rx="7.7" ry="4.8" transform="rotate(104 245 64)"/><path d="M246 59L244 70" stroke="rgb(22, 14, 10)" stroke-width="0.7" stroke-opacity="0.6"/><ellipse cx="256" cy="65" rx="6.9" ry="5.5" transform="rotate(146 256 65)"/><path d="M260 62L252 68" stroke="rgb(22, 14, 10)" stroke-width="0.7" stroke-opacity="0.6"/><ellipse cx="270" cy="66" rx="6.9" ry="5.1" transform="rotate(163 270 66)"/><path d="M275 65L265 67" stroke="rgb(22, 14, 10)" stroke-width="0.7" stroke-opacity="0.6"/><ellipse cx="210" cy="76" rx="7.2" ry="5.5" transform="rotate(32 210 76)"/><path d="M206 73L215 78" stroke="rgb(22, 14, 10)" stroke-width="0.7" stroke-opacity="0.6"/><ellipse cx="223" cy="73" rx="6.9" ry="5.2" transform="rotate(2 223 73)"/><path d="M218 73L228 73" stroke="rgb(22, 14, 10)" stroke-width="0.7" stroke-opacity="0.6"/><ellipse cx="238" cy="74" rx="6.9" ry="5.3" transform="rotate(171 238 74)"/><path d="M242 73L233 75" stroke="rgb(22, 14, 10)" stroke-width="0.7" stroke-opacity="0.6"/><ellipse cx="250" cy="76" rx="6.8" ry="5.6" transform="rotate(20 250 76)"/><path d="M245 74L254 78" stroke="rgb(22, 14, 10)" stroke-width="0.7" stroke-opacity="0.6"/><ellipse cx="266" cy="74" rx="7.7" ry="5.0" transform="rotate(73 266 74)"/><path d="M264 69L267 79" stroke="rgb(22, 14, 10)" stroke-width="0.7" stroke-opacity="0.6"/><ellipse cx="278" cy="73" rx="6.8" ry="5.5" transform="rotate(171 278 73)"/><path d="M283 73L273 74" stroke="rgb(22, 14, 10)" stroke-width="0.7" stroke-opacity="0.6"/><ellipse cx="217" cy="86" rx="6.6" ry="5.4" transform="rotate(68 217 86)"/><path d="M216 81L219 90" stroke="rgb(22, 14, 10)" stroke-width="0.7" stroke-opacity="0.6"/><ellipse cx="232" cy="83" rx="7.3" ry="5.7" transform="rotate(154 232 83)"/><path d="M236 80L227 85" stroke="rgb(22, 14, 10)" stroke-width="0.7" stroke-opacity="0.6"/><ellipse cx="245" cy="84" rx="7.2" ry="4.9" transform="rotate(151 245 84)"/><path d="M249 81L240 86" stroke="rgb(22, 14, 10)" stroke-width="0.7" stroke-opacity="0.6"/><ellipse cx="258" cy="84" rx="7.3" ry="5.2" transform="rotate(69 258 84)"/><path d="M256 79L260 88" stroke="rgb(22, 14, 10)" stroke-width="0.7" stroke-opacity="0.6"/><ellipse cx="269" cy="84" rx="7.2" ry="5.3" transform="rotate(6 269 84)"/><path d="M264 84L274 85" stroke="rgb(22, 14, 10)" stroke-width="0.7" stroke-opacity="0.6"/><ellipse cx="213" cy="92" rx="7.1" ry="5.8" transform="rotate(133 213 92)"/><path d="M217 88L210 95" stroke="rgb(22, 14, 10)" stroke-width="0.7" stroke-opacity="0.6"/><ellipse cx="224" cy="94" rx="7.8" ry="5.2" transform="rotate(156 224 94)"/><path d="M229 92L219 96" stroke="rgb(22, 14, 10)" stroke-width="0.7" stroke-opacity="0.6"/><ellipse cx="236" cy="95" rx="7.1" ry="5.0" transform="rotate(151 236 95)"/><path d="M241 93L232 97" stroke="rgb(22, 14, 10)" stroke-width="0.7" stroke-opacity="0.6"/><ellipse cx="251" cy="95" rx="7.6" ry="5.6" transform="rotate(92 251 95)"/><path d="M252 89L251 100" stroke="rgb(22, 14, 10)" stroke-width="0.7" stroke-opacity="0.6"/><ellipse cx="266" cy="91" rx="7.6" ry="5.5" transform="rotate(45 266 91)"/><path d="M262 87L270 95" stroke="rgb(22, 14, 10)" stroke-width="0.7" stroke-opacity="0.6"/><ellipse cx="278" cy="93" rx="7.2" ry="5.7" transform="rotate(35 278 93)"/><path d="M274 90L282 96" stroke="rgb(22, 14, 10)" stroke-width="0.7" stroke-opacity="0.6"/><ellipse cx="216" cy="102" rx="7.5" ry="5.3" transform="rotate(44 216 102)"/><path d="M213 99L220 106" stroke="rgb(22, 14, 10)" stroke-width="0.7" stroke-opacity="0.6"/><ellipse cx="232" cy="104" rx="7.5" ry="5.3" transform="rotate(163 232 104)"/><path d="M237 102L227 105" stroke="rgb(22, 14, 10)" stroke-width="0.7" stroke-opacity="0.6"/><ellipse cx="245" cy="101" rx="6.9" ry="4.9" transform="rotate(7 245 101)"/><path d="M241 100L250 101" stroke="rgb(22, 14, 10)" stroke-width="0.7" stroke-opacity="0.6"/><ellipse cx="257" cy="104" rx="7.6" ry="4.9" transform="rotate(33 257 104)"/><path d="M252 101L261 106" stroke="rgb(22, 14, 10)" stroke-width="0.7" stroke-opacity="0.6"/><ellipse cx="270" cy="104" rx="7.3" ry="5.7" transform="rotate(13 270 104)"/><path d="M265 102L275 105" stroke="rgb(22, 14, 10)" stroke-width="0.7" stroke-opacity="0.6"/><ellipse cx="212" cy="110" rx="7.3" ry="5.2" transform="rotate(3 212 110)"/><path d="M207 110L218 110" stroke="rgb(22, 14, 10)" stroke-width="0.7" stroke-opacity="0.6"/><ellipse cx="224" cy="111" rx="7.3" ry="5.1" transform="rotate(109 224 111)"/><path d="M226 106L222 115" stroke="rgb(22, 14, 10)" stroke-width="0.7" stroke-opacity="0.6"/><ellipse cx="238" cy="110" rx="6.6" ry="5.5" transform="rotate(84 238 110)"/><path d="M238 105L239 115" stroke="rgb(22, 14, 10)" stroke-width="0.7" stroke-opacity="0.6"/><ellipse cx="249" cy="110" rx="7.7" ry="5.4" transform="rotate(64 249 110)"/><path d="M247 105L252 115" stroke="rgb(22, 14, 10)" stroke-width="0.7" stroke-opacity="0.6"/><ellipse cx="263" cy="113" rx="7.4" ry="5.5" transform="rotate(65 263 113)"/><path d="M260 109L265 118" stroke="rgb(22, 14, 10)" stroke-width="0.7" stroke-opacity="0.6"/><ellipse cx="276" cy="111" rx="6.6" ry="5.4" transform="rotate(76 276 111)"/><path d="M275 106L277 115" stroke="rgb(22, 14, 10)" stroke-width="0.7" stroke-opacity="0.6"/><ellipse cx="218" cy="120" rx="7.7" ry="5.1" transform="rotate(127 218 120)"/><path d="M221 116L215 125" stroke="rgb(22, 14, 10)" stroke-width="0.7" stroke-opacity="0.6"/><ellipse cx="230" cy="121" rx="6.8" ry="5.7" transform="rotate(52 230 121)"/><path d="M227 117L233 125" stroke="rgb(22, 14, 10)" stroke-width="0.7" stroke-opacity="0.6"/><ellipse cx="246" cy="121" rx="7.0" ry="5.7" transform="rotate(70 246 121)"/><path d="M244 117L247 126" stroke="rgb(22, 14, 10)" stroke-width="0.7" stroke-opacity="0.6"/><ellipse cx="258" cy="121" rx="7.0" ry="4.9" transform="rotate(75 258 121)"/><path d="M257 116L260 126" stroke="rgb(22, 14, 10)" stroke-width="0.7" stroke-opacity="0.6"/><ellipse cx="270" cy="120" rx="7.7" ry="5.1" transform="rotate(125 270 120)"/><path d="M273 116L266 125" stroke="rgb(22, 14, 10)" stroke-width="0.7" stroke-opacity="0.6"/><ellipse cx="213" cy="129" rx="7.0" ry="5.1" transform="rotate(148 213 129)"/><path d="M217 126L209 131" stroke="rgb(22, 14, 10)" stroke-width="0.7" stroke-opacity="0.6"/><ellipse cx="226" cy="130" rx="7.2" ry="4.9" transform="rotate(161 226 130)"/><path d="M231 128L221 132" stroke="rgb(22, 14, 10)" stroke-width="0.7" stroke-opacity="0.6"/><ellipse cx="236" cy="129" rx="6.9" ry="5.5" transform="rotate(120 236 129)"/><path d="M239 125L234 133" stroke="rgb(22, 14, 10)" stroke-width="0.7" stroke-opacity="0.6"/><ellipse cx="250" cy="131" rx="7.7" ry="4.8" transform="rotate(114 250 131)"/><path d="M252 126L248 136" stroke="rgb(22, 14, 10)" stroke-width="0.7" stroke-opacity="0.6"/><ellipse cx="264" cy="129" rx="7.1" ry="5.1" transform="rotate(121 264 129)"/><path d="M266 125L261 133" stroke="rgb(22, 14, 10)" stroke-width="0.7" stroke-opacity="0.6"/><ellipse cx="277" cy="132" rx="7.8" ry="5.8" transform="rotate(71 277 132)"/><path d="M276 126L279 137" stroke="rgb(22, 14, 10)" stroke-width="0.7" stroke-opacity="0.6"/><ellipse cx="219" cy="141" rx="6.5" ry="5.3" transform="rotate(72 219 141)"/><path d="M217 136L220 145" stroke="rgb(22, 14, 10)" stroke-width="0.7" stroke-opacity="0.6"/><ellipse cx="232" cy="138" rx="7.8" ry="5.0" transform="rotate(67 232 138)"/><path d="M230 133L234 143" stroke="rgb(22, 14, 10)" stroke-width="0.7" stroke-opacity="0.6"/><ellipse cx="243" cy="138" rx="7.4" ry="4.9" transform="rotate(30 243 138)"/><path d="M238 136L247 141" stroke="rgb(22, 14, 10)" stroke-width="0.7" stroke-opacity="0.6"/><ellipse cx="258" cy="139" rx="7.4" ry="5.1" transform="rotate(146 258 139)"/><path d="M262 136L254 142" stroke="rgb(22, 14, 10)" stroke-width="0.7" stroke-opacity="0.6"/><ellipse cx="271" cy="140" rx="6.6" ry="5.3" transform="rotate(3 271 140)"/><path d="M267 140L276 140" stroke="rgb(22, 14, 10)" stroke-width="0.7" stroke-opacity="0.6"/><ellipse cx="211" cy="148" rx="7.1" ry="4.9" transform="rotate(142 211 148)"/><path d="M215 145L207 151" stroke="rgb(22, 14, 10)" stroke-width="0.7" stroke-opacity="0.6"/><ellipse cx="224" cy="148" rx="6.6" ry="5.4" transform="rotate(23 224 148)"/><path d="M220 146L228 150" stroke="rgb(22, 14, 10)" stroke-width="0.7" stroke-opacity="0.6"/><ellipse cx="236" cy="148" rx="6.8" ry="5.6" transform="rotate(44 236 148)"/><path d="M233 145L239 151" stroke="rgb(22, 14, 10)" stroke-width="0.7" stroke-opacity="0.6"/><ellipse cx="250" cy="146" rx="6.7" ry="5.3" transform="rotate(100 250 146)"/><path d="M251 142L250 151" stroke="rgb(22, 14, 10)" stroke-width="0.7" stroke-opacity="0.6"/><ellipse cx="264" cy="149" rx="6.5" ry="5.7" transform="rotate(28 264 149)"/><path d="M260 147L268 152" stroke="rgb(22, 14, 10)" stroke-width="0.7" stroke-opacity="0.6"/><ellipse cx="279" cy="148" rx="7.0" ry="5.4" transform="rotate(155 279 148)"/><path d="M283 146L274 150" stroke="rgb(22, 14, 10)" stroke-width="0.7" stroke-opacity="0.6"/></g><text x="36.5" y="8.6" font-family="Liberation Serif" font-size="7.6" fill="#222" text-anchor="middle">Light Roast</text><text x="106" y="8.6" font-family="Liberation Serif" font-size="7.6" fill="#222" text-anchor="middle">Medium Roast</text><text x="175.5" y="8.6" font-family="Liberation Serif" font-size="7.6" fill="#222" text-anchor="middle">Medium Dark Roast</text><text x="245" y="8.6" font-family="Liberation Serif" font-size="7.6" fill="#222" text-anchor="middle">Dark Roast</text><text x="36.5" y="161.0" font-family="Liberation Serif" font-size="7.3" fill="#333" text-anchor="middle">internal</text><text x="36.5" y="171.9" font-family="Liberation Serif" font-size="7.3" fill="#333" text-anchor="middle">temperature</text><text x="36.5" y="182.8" font-family="Liberation Serif" font-size="7.3" fill="#333" text-anchor="middle">of around 356°F</text><text x="36.5" y="193.7" font-family="Liberation Serif" font-size="7.3" fill="#333" text-anchor="middle">(180°C)</text><text x="106" y="161.0" font-family="Liberation Serif" font-size="7.3" fill="#333" text-anchor="middle">internal</text><text x="106" y="171.9" font-family="Liberation Serif" font-size="7.3" fill="#333" text-anchor="middle">temperature of</text><text x="106" y="182.8" font-family="Liberation Serif" font-size="7.3" fill="#333" text-anchor="middle">around 410°F</text><text x="106" y="193.7" font-family="Liberation Serif" font-size="7.3" fill="#333" text-anchor="middle">(210°C)</text><text x="175.5" y="161.0" font-family="Liberation Serif" font-size="7.3" fill="#333" text-anchor="middle">internal</text><text x="175.5" y="171.9" font-family="Liberation Serif" font-size="7.3" fill="#333" text-anchor="middle">temperature of</text><text x="175.5" y="182.8" font-family="Liberation Serif" font-size="7.3" fill="#333" text-anchor="middle">around 437°F</text><text x="175.5" y="193.7" font-family="Liberation Serif" font-size="7.3" fill="#333" text-anchor="middle">(225°C)</text><text x="245" y="161.0" font-family="Liberation Serif" font-size="7.3" fill="#333" text-anchor="middle">internal</text><text x="245" y="171.9" font-family="Liberation Serif" font-size="7.3" fill="#333" text-anchor="middle">temperature of</text><text x="245" y="182.8" font-family="Liberation Serif" font-size="7.3" fill="#333" text-anchor="middle">around 464°F</text><text x="245" y="193.7" font-family="Liberation Serif" font-size="7.3" fill="#333" text-anchor="middle">(240°C)</text></symbol></defs></svg>
<!-- top bar -->
<div class="a" style="left:0;top:0;width:1024px;height:2px;background:#e2e4e8"></div>

<!-- header -->
<div class="a" style="left:10px;top:3px;font-size:17.2px;line-height:22px;color:#2d2a2e;letter-spacing:0.05px;-webkit-text-stroke:0.3px #2d2a2e">Edit Article</div>
<div class="a" style="left:11px;top:40px;font-size:9.7px;line-height:12px;color:#4a494d">Do you need help creating a knowledge article? <span style="color:#3d5a9a;text-decoration:underline">Learn how to create one.</span></div>

<!-- buttons -->
<div class="a" style="left:752px;top:16px;width:52px;height:22px;border-radius:3px;background:#e5e9f7;color:#3b5591;font-weight:700;font-size:8.4px;line-height:22px;text-align:center">Close</div>
<div class="a" style="left:814px;top:16px;width:90px;height:22px;border-radius:3px;background:#c8d1e8"></div>
<div class="a" style="left:814px;top:16px;width:66px;height:22px;color:#fff;font-weight:700;font-size:8.5px;line-height:22px;text-align:center">Save</div>
<div class="a" style="left:880px;top:16px;width:1px;height:22px;background:#eef0f6"></div>
<div class="a" style="left:914px;top:16px;width:90px;height:22px;border-radius:3px;background:#c8d1e8"></div>
<div class="a" style="left:914px;top:16px;width:67px;height:22px;color:#fff;font-weight:700;font-size:8.5px;line-height:22px;text-align:center">Publish</div>
<div class="a" style="left:981px;top:16px;width:1px;height:22px;background:#eef0f6"></div>
<svg style="left:0;top:0" width="1024" height="60">
  <path d="M888.5 25.5 L892 29 L895.5 25.5" fill="none" stroke="#fff" stroke-width="1"/>
  <path d="M989 25.5 L992.5 29 L996 25.5" fill="none" stroke="#fff" stroke-width="1"/>
</svg>

<!-- CARD 1 -->
<div class="card" style="left:11px;top:74px;width:705px;height:269px"></div>
<div class="a" style="left:28px;top:89px;font-size:13.4px;line-height:18px;color:#38373c">Set up the Article</div>
<svg style="left:0;top:0" width="1" height="1"><rect x="28" y="148.2" width="670" height="1.5" fill="#dfe2ea"/><rect x="28" y="146.7" width="223.5" height="1.6" fill="#4f659e"/></svg>
<div class="a" style="left:28px;top:128px;width:223px;font-size:8.7px;line-height:12px;text-align:center;color:#3f3f44">Details</div>
<div class="a" style="left:251px;top:128px;width:224px;font-size:8.7px;line-height:12px;text-align:center;color:#3f3f44">Phrasings(0)</div>
<div class="a" style="left:475px;top:128px;width:223px;font-size:8.7px;line-height:12px;text-align:center;color:#3f3f44">Revisions</div>

<!-- form -->
<div class="lbl" style="left:28.4px;top:161px;font-size:9px;line-height:12px">Title <span style="color:#d9333a">*</span></div>
<svg style="left:0;top:0" width="1" height="1"><circle cx="59.6" cy="166.4" r="4.1" fill="none" stroke="#444" stroke-width="0.95"/><path d="M59.6 165.6v3" stroke="#444" stroke-width="0.95"/><circle cx="59.6" cy="164.1" r="0.55" fill="#444"/></svg>
<div class="inp" style="left:28px;top:176px;width:318px;height:23px"></div>
<div class="a" style="left:39px;top:181px;font-size:9px;line-height:12px;color:#45454a">Coffee roasts</div>
<svg style="left:0;top:0" width="1" height="1"><path d="M327.5 184.5l6.5 6.5M334 184.5l-6.5 6.5" stroke="#555" stroke-width="1.1"/></svg>

<div class="lbl" style="left:28px;top:217px;font-size:9px;line-height:12px">Category</div>
<div class="inp" style="left:28px;top:233px;width:318px;height:23px"></div>
<div class="a" style="left:37px;top:238px;font-size:9px;line-height:12px;color:#6f6f75">Brewing guides</div>
<svg style="left:0;top:0" width="1" height="1"><path d="M327.5 241.5l3.5 3.5l3.5-3.5" fill="none" stroke="#555" stroke-width="1"/></svg>

<div class="lbl" style="left:28px;top:267px;font-size:9px;line-height:12px">Labels</div>
<div class="inp" style="left:28px;top:282px;width:318px;height:23px"></div>
<div class="a" style="left:37.5px;top:287px;font-size:9px;line-height:12px;color:#77777d">beans</div>
<div class="a" style="left:288px;top:286px;width:35px;height:14px;border-radius:7px;background:#e3e6ec"></div>
<svg style="left:0;top:0" width="1" height="1"><path d="M298.2 290.8l2.2-1.3v6.6" fill="none" stroke="#333" stroke-width="1.5"/><path d="M308 290l6.8 6.8M314.8 290l-6.8 6.8" stroke="#3a3a3a" stroke-width="1.2"/><path d="M327.5 291l3.5 3.5l3.5-3.5" fill="none" stroke="#555" stroke-width="1"/></svg>
<div class="a" style="left:28px;top:308px;width:54px;height:14px;border-radius:7px;background:#1f3a7a"></div>
<div class="a" style="left:36.5px;top:309px;font-size:8.5px;line-height:12px;font-weight:700;color:#fff">beans</div>
<svg style="left:0;top:0" width="1" height="1"><path d="M66.5 311.5l6.5 6.5M73 311.5l-6.5 6.5" stroke="#fff" stroke-width="1.1"/></svg>

<!-- info card -->
<div class="a" style="left:360px;top:161px;width:341px;height:168px;background:#f3f5f9;border-right:3px solid #1e6b47;border-bottom:3px solid #1e6b47;border-radius:4px"></div>
<div class="lbl" style="left:370px;top:176px;font-size:8.6px;line-height:11px;color:#3a3d4a">Knowledge base</div>
<div class="a" style="left:370px;top:186px;font-size:10.2px;line-height:13px;color:#45474f">Coffee</div>
<div class="lbl" style="left:370px;top:212px;font-size:8.6px;line-height:11px;color:#3a3d4a">Language</div>
<div class="a" style="left:370px;top:223px;font-size:10.1px;line-height:13px;color:#45474f">English United States (en-US)</div>
<div class="lbl" style="left:370px;top:251px;font-size:8.6px;line-height:11px;color:#3a3d4a">Date Created</div>
<div class="a" style="left:370px;top:262px;font-size:9.95px;line-height:13px;color:#45474f">Sep 24, 2025, 08:40:25 AM</div>
<div class="lbl" style="left:370px;top:286.5px;font-size:8.6px;line-height:11px;color:#3a3d4a">Date Modified</div>
<div class="a" style="left:370px;top:297px;font-size:9.95px;line-height:13px;color:#45474f">Sep 24, 2025, 08:40:27 AM</div>

<div class="lbl" style="left:561px;top:176px;font-size:8.6px;line-height:11px;color:#3a3d4a">Visibility</div>
<div class="a" style="left:562px;top:189px;width:23px;height:11px;border-radius:6px;background:#2341a0"></div>
<div class="a" style="left:573.5px;top:190px;width:9px;height:9px;border-radius:50%;background:#fff"></div>
<svg style="left:0;top:0" width="1" height="1"><path d="M576 194.8l1.5 1.5l2.6-2.8" fill="none" stroke="#2341a0" stroke-width="0.8"/></svg>
<div class="a" style="left:591px;top:189px;font-size:9px;line-height:11px;color:#45474f">On</div>
<div class="lbl" style="left:561px;top:212px;font-size:8.6px;line-height:11px;color:#3a3d4a">Feedback</div>
<svg style="left:0;top:0" width="1" height="1"><circle cx="610" cy="216.8" r="3.8" fill="none" stroke="#444" stroke-width="0.9"/><path d="M610 215.6v3.2" stroke="#444" stroke-width="0.9"/><circle cx="610" cy="214.3" r="0.5" fill="#444"/></svg>
<div class="a" style="left:560px;top:223px;width:30px;height:17px;border-radius:8px;background:#d4eee8"></div>
<div class="a" style="left:560px;top:226px;width:30px;font-size:8px;line-height:11px;font-weight:700;color:#3a3d4a;text-align:center">--%</div>
<div class="lbl" style="left:561px;top:251px;font-size:8.6px;line-height:11px;color:#3a3d4a">Created By</div>
<div class="a" style="left:547px;top:262px;width:84px;height:20px;background:#eceef2;filter:blur(2px);border-radius:4px"></div>
<div class="lbl" style="left:561px;top:286px;font-size:8.6px;line-height:11px;color:#3a3d4a">Status</div>
<div class="a" style="left:561px;top:297px;font-size:10px;line-height:13px;color:#2e7a6a">Published</div>

<!-- CARD 2 -->
<div class="card" style="left:11px;top:360px;width:705px;height:300px"></div>
<div class="a" style="left:28.5px;top:375px;font-size:13.5px;line-height:18px;color:#38373c">Content for the Answer</div>
<svg style="left:0;top:0" width="1" height="1"><circle cx="175" cy="384.2" r="4.2" fill="none" stroke="#444" stroke-width="0.9"/><path d="M175 382.8v3.6" stroke="#444" stroke-width="0.9"/><circle cx="175" cy="381.3" r="0.55" fill="#444"/></svg>
<!-- editor -->
<div class="a" style="left:28px;top:428px;width:670px;height:200px;border-left:1px solid #e6e8ee;border-right:1px solid #e6e8ee"></div>
<div class="a" style="left:135px;top:399px;width:563px;height:29px;background:#f3f5f9"></div>
<svg style="left:0;top:0" width="1" height="1"><rect x="28" y="426.6" width="107.5" height="1.4" fill="#4f659e"/></svg>
<div class="a" style="left:135px;top:402px;width:1px;height:21px;background:#e2e6f0"></div>
<div class="a" style="left:37px;top:407px;font-size:8.6px;line-height:12px;color:#3a3a40">Default</div>
<svg style="left:0;top:0" width="1" height="1"><circle cx="120.7" cy="409.6" r="0.95" fill="#2c4290"/><circle cx="120.7" cy="412.8" r="0.95" fill="#2c4290"/><circle cx="120.7" cy="416" r="0.95" fill="#2c4290"/><path d="M150 408.8v8.5M145.8 413h8.5" stroke="#3d5590" stroke-width="1.3"/></svg>
<!-- toolbar -->
<div class="a" style="left:38px;top:438px;width:91px;height:20px;border-radius:3px;background:#f2f4f8"></div>
<div class="a" style="left:43.5px;top:442px;font-size:10px;line-height:13px;color:#3a3a44">Paragraph</div>
<div class="a" style="left:132px;top:438px;width:92px;height:20px;border-radius:3px;background:#f2f4f8"></div>
<div class="a" style="left:138.5px;top:442px;font-size:10px;line-height:13px;color:#3a3a44">Medium</div>
<div class="a" style="left:36px;top:461px;width:654px;height:1px;background:#e3e6ec"></div>
<div class="a" style="left:29px;top:466px;width:668px;height:6px;background:linear-gradient(#f0f2f5,#fbfbfc)"></div>
<div class="a" style="left:305px;top:434px;width:1px;height:27px;background:#e3e6ec"></div>
<div class="a" style="left:421px;top:434px;width:1px;height:27px;background:#e3e6ec"></div>
<div class="a" style="left:536px;top:434px;width:1px;height:27px;background:#e3e6ec"></div>
<svg style="left:0;top:0" width="1" height="1" fill="none" stroke="#2c3654">
 <path d="M117 446l3.5 3.5l3.5-3.5M211 446l3.5 3.5l3.5-3.5M251 446l3 3l3-3M287 446l3 3l3-3M482 446l3 3l3-3M518 446l3 3l3-3M640 446l3 3l3-3" stroke="#777c88" stroke-width="0.9"/>
 <!-- font color A -->
 <path d="M234 450.8l3.2-7.6l3.2 7.6M235.2 448.2h4" stroke-width="1.5"/>
 <rect x="231" y="452.3" width="12.5" height="2" fill="#1b1f2e" stroke="none"/>
 <!-- highlighter -->
 <path d="M267.6 450.8l1.2-3.4l5.6-5.2l3.1 3.1l-5.2 5.6z" fill="#2c3654" stroke="none"/><path d="M271.4 444.9l3.1 3.1" stroke="#fff" stroke-width="0.7"/>
 <rect x="266" y="452.3" width="13" height="2" fill="#1b1f2e" stroke="none"/>
 <!-- B I U S -->
 <path d="M321.7 442.5h1.5M321.7 454.3h1.5M323 442.5h4.8c2.2 0 3.3 1.2 3.3 2.9c0 1.6-1.1 2.7-3 2.9c2.3 0.1 3.6 1.3 3.6 3.1c0 1.9-1.4 3-3.6 3h-5.1zM323 448.3h4.8" stroke-width="1.5"/>
 <path d="M349 442.6h7M345.7 454.2h7M352.5 442.6l-3.2 11.6" stroke-width="1.4"/>
 <path d="M371.5 442.5v6.5c0 2.5 1.8 3.8 4.5 3.8s4.5-1.3 4.5-3.8v-6.5M370 455h12" stroke-width="1.4"/>
 <path d="M405 444c-0.8-1-2.3-1.5-4-1.5c-2.3 0-4 1-4 2.8c0 1 0.5 1.6 1.3 2.2M393.8 448.3h13.5M403.2 450c0.8 0.5 1.3 1.1 1.3 2c0 1.8-1.7 2.7-4 2.7c-1.8 0-3.3-0.6-4.2-1.6" stroke-width="1.2"/>
 <!-- align -->
 <path d="M437 442.3h7M437 446.2h11.5M437 450h7M437 453.9h11.5" stroke-width="1.3"/>
 <!-- bullets -->
 <path d="M465.5 442.5h9.5M465.5 447.5h9.5M465.5 452.5h9.5" stroke-width="1.3"/>
 <rect x="461" y="441.8" width="1.5" height="1.5" fill="#2c3654" stroke="none"/><rect x="461" y="446.8" width="1.5" height="1.5" fill="#2c3654" stroke="none"/><rect x="461" y="451.8" width="1.5" height="1.5" fill="#2c3654" stroke="none"/>
 <!-- numbered -->
 <path d="M502.5 443.5h7.5M502.5 447.5h7.5M502.5 451.5h7.5" stroke-width="1.3"/>
 <text x="497.3" y="446.6" font-size="5.5" font-family="Liberation Sans" font-weight="700" fill="#2c3654" stroke="none">1</text>
 <text x="497.3" y="453.6" font-size="5.5" font-family="Liberation Sans" font-weight="700" fill="#2c3654" stroke="none">2</text>
 <!-- image -->
 <rect x="550.5" y="442.3" width="13" height="12" rx="1" stroke-width="1.3"/>
 <path d="M551.5 453.5l4-5l2.5 2.5l1.5-1.8l3.5 4.3z" fill="#2c3654" stroke="none"/>
 <circle cx="554.5" cy="445.5" r="1" fill="#2c3654" stroke="none"/>
 <!-- film -->
 <rect x="575.5" y="442.3" width="13" height="12" rx="1" fill="#151515" stroke="none"/>
 <rect x="578.8" y="443.6" width="6.4" height="4" fill="#fff" stroke="none"/>
 <rect x="578.8" y="449" width="6.4" height="4" fill="#fff" stroke="none"/>
 <rect x="576.6" y="443.6" width="1.2" height="1.4" fill="#fff" stroke="none"/><rect x="576.6" y="447.6" width="1.2" height="1.4" fill="#fff" stroke="none"/><rect x="576.6" y="451.6" width="1.2" height="1.4" fill="#fff" stroke="none"/>
 <rect x="586.2" y="443.6" width="1.2" height="1.4" fill="#fff" stroke="none"/><rect x="586.2" y="447.6" width="1.2" height="1.4" fill="#fff" stroke="none"/><rect x="586.2" y="451.6" width="1.2" height="1.4" fill="#fff" stroke="none"/>
 <!-- link -->
 <path d="M602.6 449.2a2.5 2.5 0 0 1 0.2-5h3.6a2.6 2.6 0 0 1 2 4.2M609.4 446.5a2.6 2.6 0 0 1 0.4 5.3h-3.8a2.6 2.6 0 0 1-2.1-4.1" stroke-width="1.45"/>
 <!-- table -->
 <rect x="622.6" y="442.5" width="12.8" height="12" rx="0.8" stroke-width="1.3"/>
 <rect x="622.6" y="441.8" width="12.8" height="3.4" fill="#2c3654" stroke="none"/>
 <path d="M622.6 448.8h12.8M629 445v9.5" stroke-width="1.2"/>
</svg>
<!-- content -->
<div class="a" style="left:40.5px;top:479px;font-size:11.1px;line-height:16px;color:#1f1f24;letter-spacing:0">Most roasters have specialized names for their favored roasts and there is very little industry standardization. This can cause some</div>
<div class="a" style="left:40.5px;top:494.7px;font-size:11.1px;line-height:16px;color:#1f1f24;letter-spacing:0.11px">confusion when you're buying, but in general, roasts fall into one of four color categories —</div>
<div class="a" style="left:499.6px;top:494.7px;font-size:11.1px;line-height:16px;color:#1f1f24;letter-spacing:0.09px;font-weight:700">light, medium, medium-dark and</div>
<svg style="left:79.4px;top:519px" width="281" height="196" viewBox="0 0 281 196"><use href="#fig"/></svg>

<!-- RIGHT PANEL -->
<div class="card" style="left:732px;top:52px;width:300px;height:508px;border-radius:7px;border-color:#dde0e7"></div>
<svg style="left:0;top:0" width="1" height="1"><rect x="743.9" y="60.4" width="269.3" height="492.9" fill="none" stroke="#e5080f" stroke-width="2.6"/></svg>
<div class="a" style="left:750.5px;top:69.5px;width:259.5px;height:473.5px;border:1.5px solid #d8dce5;border-radius:7px;background:#fff"></div>
<div class="a" style="left:750.5px;top:69.5px;width:259.5px;height:45.5px;background:#d6def6;border-radius:7px 7px 0 0"></div>
<div class="a" style="left:762px;top:84px;font-size:12.6px;line-height:16px;color:#2e2d33;-webkit-text-stroke:0.25px #2e2d33">Test Articles</div>
<svg style="left:0;top:0" width="1" height="1"><path d="M951.9 88.3h9.9l-4.6 8.3z" fill="none" stroke="#3a5090" stroke-width="1.1" stroke-linejoin="round"/></svg>
<div class="a" style="left:968.5px;top:87px;font-size:8.7px;line-height:12px;font-weight:700;color:#2f4a8a">Filter</div>
<div class="a" style="left:888px;top:126px;width:116px;height:26px;border:1px solid #cdd2dc;border-radius:7px;background:#fff"></div>
<div class="a" style="left:900.5px;top:133px;font-size:8.95px;line-height:12px;color:#45454c">picture of coffee roasts</div>
<!-- result card -->
<div class="a" style="left:757px;top:157.5px;width:222px;height:270px;border:1px solid #d5d9e2;border-radius:0 7px 7px 7px;background:#fff"></div>
<div class="a" style="left:943.3px;top:168.7px;width:5.4px;height:5.4px;border-radius:50%;background:#1e6b47"></div>
<div class="a" style="left:949.5px;top:165.5px;font-size:9px;line-height:12px;color:#4a4a52">92%</div>
<div class="a" style="left:768.7px;top:181.5px;font-size:9px;line-height:12.65px;color:#55555c">Most roasters have specialized names for their<br>favored roasts and there is very little industry<br>standardization. This can cause some confusion<br>when you’re buying, but in general, roasts fall<br>into one of four color categories — <b style="color:#3a3a40">light,</b><br><b style="color:#3a3a40">medium, medium-dark and dark</b>.</div>
<svg style="left:777px;top:263.3px" width="179.4" height="125.1" viewBox="0 0 281 196"><use href="#fig"/></svg>
<div class="a" style="left:768.7px;top:409.2px;font-size:8.2px;line-height:12px;color:#3d5a9a;text-decoration:underline">Read Less</div>
<div class="a" style="left:751px;top:502px;width:259px;height:1px;background:#d5d9e2"></div>
<div class="a" style="left:764px;top:516px;font-size:8.85px;line-height:12px;color:#6f6f77">Type message here and press return key</div>
<svg style="left:0;top:0" width="1" height="1"><path d="M986.6 519.9A4.7 4.7 0 1 1 986.4 525.9" fill="none" stroke="#221c1c" stroke-width="1.35"/><path d="M984.8 517.3v4.3h4.2" fill="none" stroke="#221c1c" stroke-width="1.5"/></svg>

<!-- scrollbars -->
<div class="a" style="left:1017px;top:2px;width:7px;height:619px;background:#f1f1f1"></div>
<div class="a" style="left:1017px;top:8.5px;width:9px;height:362px;border-radius:4px;background:#8a8a8a"></div>
<div class="a" style="left:0;top:621px;width:1017px;height:12px;background:#f1f1f1"></div>
<div class="a" style="left:0;top:621px;width:1011px;height:14px;border-radius:5px;background:#8a8a8a"></div>
<div class="a" style="left:1017px;top:621px;width:7px;height:12px;background:#fff"></div>

</body></html>
